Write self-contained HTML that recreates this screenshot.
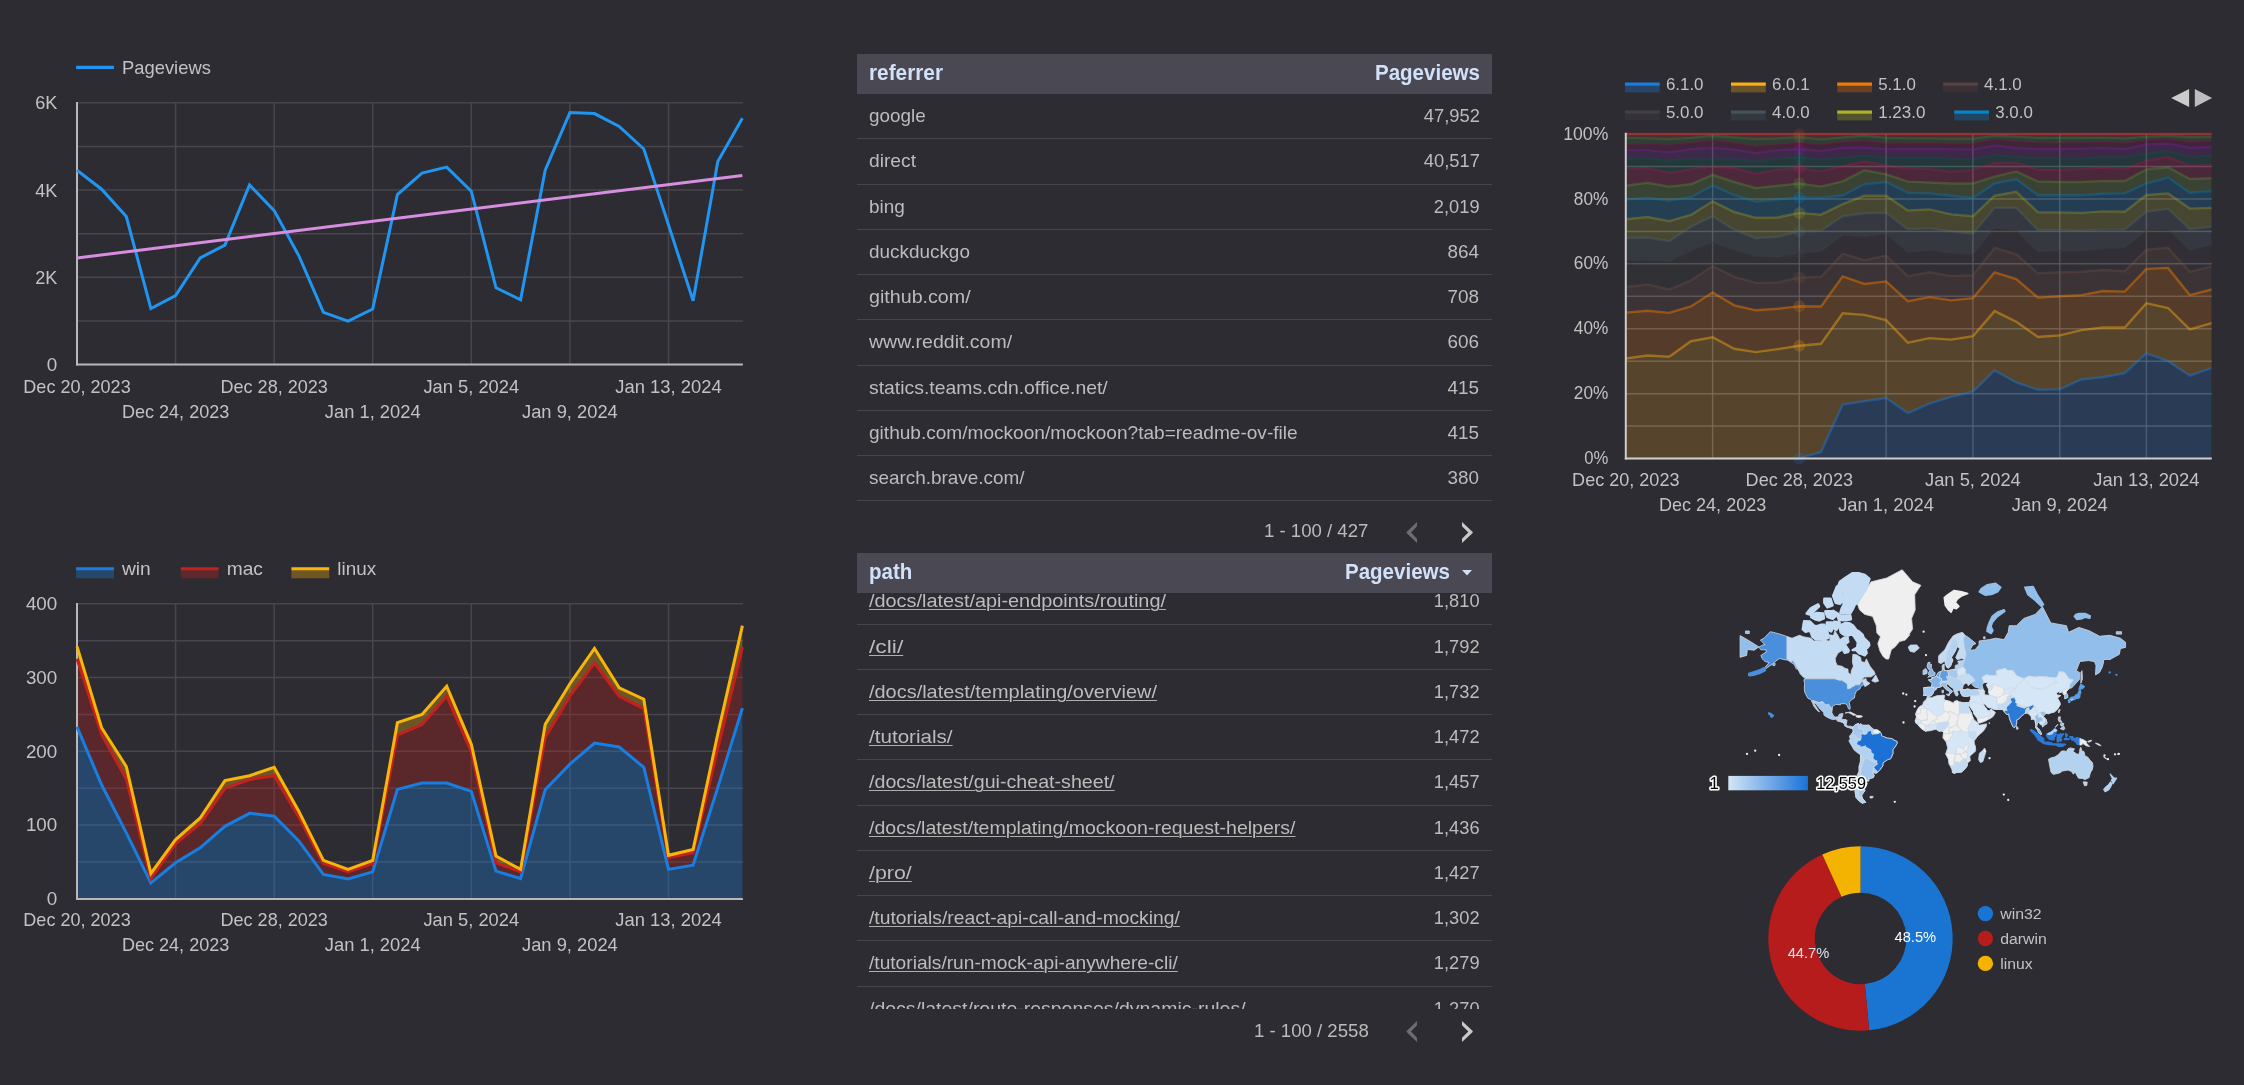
<!DOCTYPE html>
<html lang="en">
<head>
<meta charset="utf-8">
<title>Mockoon analytics dashboard</title>
<style>
html,body{margin:0;padding:0;background:#2e2c33;}
body{width:2244px;height:1085px;position:relative;overflow:hidden;font-family:"Liberation Sans",sans-serif;color:#c3c3c3;}
svg{position:absolute;overflow:visible;}
svg text{font-family:"Liberation Sans",sans-serif;}
.tbl{position:absolute;left:857px;width:635.3px;}
.tbl,.pg,svg{will-change:opacity;opacity:0.999;}
.th{position:absolute;left:0;width:100%;height:40.2px;background:#4b4953;color:#d3e2fb;font-weight:bold;font-size:21.7px;}
.th span{position:absolute;top:-0.6px;line-height:40.2px;white-space:nowrap;display:inline-block;}
.body{position:absolute;left:0;width:100%;overflow:hidden;}
.row{position:absolute;left:0;width:100%;height:45.25px;border-bottom:1.5px solid #47454d;box-sizing:border-box;font-size:18.6px;color:#bdbdbd;}
.row span,.pg span{position:absolute;white-space:nowrap;display:inline-block;line-height:22px;}
.row .l{left:12.2px;transform-origin:0 50%;}
.row .r{right:12.8px;transform-origin:100% 50%;}
.row a{color:inherit;text-decoration:underline;text-decoration-thickness:1.25px;text-underline-offset:2.1px;text-decoration-color:#b0b0b0;}
.pg{position:absolute;font-size:18.6px;color:#bcbcbc;}
</style>
</head>
<body>

<svg width="800" height="440" viewBox="0 20 800 440" style="left:0;top:20px">
<g stroke="#48474d" stroke-width="1.5">
<line x1="175.6" y1="102.8" x2="175.6" y2="364.6"/>
<line x1="274.2" y1="102.8" x2="274.2" y2="364.6"/>
<line x1="372.7" y1="102.8" x2="372.7" y2="364.6"/>
<line x1="471.3" y1="102.8" x2="471.3" y2="364.6"/>
<line x1="569.9" y1="102.8" x2="569.9" y2="364.6"/>
<line x1="668.5" y1="102.8" x2="668.5" y2="364.6"/>
<line x1="77.0" y1="102.8" x2="742.9" y2="102.8"/>
<line x1="77.0" y1="146.4" x2="742.9" y2="146.4"/>
<line x1="77.0" y1="190.1" x2="742.9" y2="190.1"/>
<line x1="77.0" y1="233.7" x2="742.9" y2="233.7"/>
<line x1="77.0" y1="277.3" x2="742.9" y2="277.3"/>
<line x1="77.0" y1="320.9" x2="742.9" y2="320.9"/>
</g>
<g stroke="#b9b9b9" stroke-width="2"><line x1="77.0" y1="102.1" x2="77.0" y2="365.6"/><line x1="76.0" y1="364.6" x2="742.9" y2="364.6"/></g>
<polyline fill="none" stroke="#2196f3" stroke-width="3" stroke-linejoin="miter" points="77.0,170.3 101.6,189.2 126.3,216.6 150.9,308.6 175.6,295.6 200.2,257.9 224.9,245.1 249.5,184.9 274.2,210.6 298.8,255.7 323.4,312.3 348.1,321.1 372.7,309.0 397.4,194.6 422.0,173.0 446.7,167.1 471.3,191.2 496.0,287.8 520.6,299.8 545.2,170.2 569.9,112.6 594.5,113.6 619.2,126.5 643.8,149.0 668.5,224.9 693.1,300.8 717.8,161.5 742.4,118.3"/>
<line x1="77.0" y1="257.9" x2="742.3" y2="175.4" stroke="#d88fe2" stroke-width="3"/>
<line x1="76.1" y1="67.4" x2="113.9" y2="67.4" stroke="#2196f3" stroke-width="3.2"/>
<text x="122.0" y="74.1" font-size="18.6" text-anchor="start" fill="#c3c3c3" textLength="88.9" lengthAdjust="spacingAndGlyphs">Pageviews</text>
<text x="57.3" y="109.3" font-size="18.6" text-anchor="end" fill="#c3c3c3" textLength="22.1" lengthAdjust="spacingAndGlyphs">6K</text>
<text x="57.3" y="196.6" font-size="18.6" text-anchor="end" fill="#c3c3c3" textLength="22.1" lengthAdjust="spacingAndGlyphs">4K</text>
<text x="57.3" y="283.8" font-size="18.6" text-anchor="end" fill="#c3c3c3" textLength="22.1" lengthAdjust="spacingAndGlyphs">2K</text>
<text x="57.3" y="371.1" font-size="18.6" text-anchor="end" fill="#c3c3c3" textLength="10.5" lengthAdjust="spacingAndGlyphs">0</text>
<text x="77.0" y="392.7" font-size="18.6" text-anchor="middle" fill="#c3c3c3" textLength="107.4" lengthAdjust="spacingAndGlyphs">Dec 20, 2023</text>
<text x="175.6" y="417.5" font-size="18.6" text-anchor="middle" fill="#c3c3c3" textLength="107.4" lengthAdjust="spacingAndGlyphs">Dec 24, 2023</text>
<text x="274.2" y="392.7" font-size="18.6" text-anchor="middle" fill="#c3c3c3" textLength="107.4" lengthAdjust="spacingAndGlyphs">Dec 28, 2023</text>
<text x="372.7" y="417.5" font-size="18.6" text-anchor="middle" fill="#c3c3c3" textLength="95.8" lengthAdjust="spacingAndGlyphs">Jan 1, 2024</text>
<text x="471.3" y="392.7" font-size="18.6" text-anchor="middle" fill="#c3c3c3" textLength="95.8" lengthAdjust="spacingAndGlyphs">Jan 5, 2024</text>
<text x="569.9" y="417.5" font-size="18.6" text-anchor="middle" fill="#c3c3c3" textLength="95.8" lengthAdjust="spacingAndGlyphs">Jan 9, 2024</text>
<text x="668.5" y="392.7" font-size="18.6" text-anchor="middle" fill="#c3c3c3" textLength="106.3" lengthAdjust="spacingAndGlyphs">Jan 13, 2024</text>
</svg>
<svg width="800" height="460" viewBox="0 540 800 460" style="left:0;top:540px">
<g stroke="#48474d" stroke-width="1.5">
<line x1="175.6" y1="603.8" x2="175.6" y2="898.9"/>
<line x1="274.2" y1="603.8" x2="274.2" y2="898.9"/>
<line x1="372.7" y1="603.8" x2="372.7" y2="898.9"/>
<line x1="471.3" y1="603.8" x2="471.3" y2="898.9"/>
<line x1="569.9" y1="603.8" x2="569.9" y2="898.9"/>
<line x1="668.5" y1="603.8" x2="668.5" y2="898.9"/>
<line x1="77.0" y1="603.8" x2="742.9" y2="603.8"/>
<line x1="77.0" y1="640.7" x2="742.9" y2="640.7"/>
<line x1="77.0" y1="677.6" x2="742.9" y2="677.6"/>
<line x1="77.0" y1="714.5" x2="742.9" y2="714.5"/>
<line x1="77.0" y1="751.3" x2="742.9" y2="751.3"/>
<line x1="77.0" y1="788.2" x2="742.9" y2="788.2"/>
<line x1="77.0" y1="825.1" x2="742.9" y2="825.1"/>
<line x1="77.0" y1="862.0" x2="742.9" y2="862.0"/>
</g>
<polygon fill="#1a7fe2" fill-opacity="0.32" points="77.0,726.9 101.6,784.8 126.3,832.9 150.9,883.0 175.6,862.8 200.2,847.8 224.9,826.3 249.5,813.3 274.2,816.3 298.8,840.9 323.4,874.4 348.1,879.0 372.7,871.9 397.4,789.4 422.0,783.1 446.7,783.1 471.3,791.4 496.0,871.1 520.6,878.5 545.2,789.8 569.9,764.1 594.5,743.0 619.2,747.0 643.8,767.4 668.5,869.4 693.1,865.2 717.8,787.6 742.4,708.1 742.4,898.9 717.8,898.9 693.1,898.9 668.5,898.9 643.8,898.9 619.2,898.9 594.5,898.9 569.9,898.9 545.2,898.9 520.6,898.9 496.0,898.9 471.3,898.9 446.7,898.9 422.0,898.9 397.4,898.9 372.7,898.9 348.1,898.9 323.4,898.9 298.8,898.9 274.2,898.9 249.5,898.9 224.9,898.9 200.2,898.9 175.6,898.9 150.9,898.9 126.3,898.9 101.6,898.9 77.0,898.9"/>
<polygon fill="#c5211f" fill-opacity="0.3" points="77.0,658.8 101.6,734.3 126.3,779.0 150.9,878.5 175.6,843.7 200.2,823.8 224.9,788.4 249.5,779.5 274.2,775.7 298.8,817.1 323.4,863.6 348.1,871.9 372.7,863.6 397.4,735.2 422.0,724.4 446.7,696.2 471.3,751.7 496.0,862.8 520.6,871.9 545.2,737.6 569.9,696.2 594.5,663.0 619.2,696.2 643.8,708.6 668.5,857.8 693.1,852.8 717.8,748.4 742.4,647.2 742.4,708.1 717.8,787.6 693.1,865.2 668.5,869.4 643.8,767.4 619.2,747.0 594.5,743.0 569.9,764.1 545.2,789.8 520.6,878.5 496.0,871.1 471.3,791.4 446.7,783.1 422.0,783.1 397.4,789.4 372.7,871.9 348.1,879.0 323.4,874.4 298.8,840.9 274.2,816.3 249.5,813.3 224.9,826.3 200.2,847.8 175.6,862.8 150.9,883.0 126.3,832.9 101.6,784.8 77.0,726.9"/>
<polygon fill="#f9b709" fill-opacity="0.31" points="77.0,646.4 101.6,727.7 126.3,766.5 150.9,873.5 175.6,839.5 200.2,818.0 224.9,780.6 249.5,775.7 274.2,767.4 298.8,811.3 323.4,860.3 348.1,869.4 372.7,860.3 397.4,722.7 422.0,714.4 446.7,686.2 471.3,744.3 496.0,856.1 520.6,869.4 545.2,724.4 569.9,683.7 594.5,648.4 619.2,687.9 643.8,699.2 668.5,855.3 693.1,849.5 717.8,733.8 742.4,625.7 742.4,647.2 717.8,748.4 693.1,852.8 668.5,857.8 643.8,708.6 619.2,696.2 594.5,663.0 569.9,696.2 545.2,737.6 520.6,871.9 496.0,862.8 471.3,751.7 446.7,696.2 422.0,724.4 397.4,735.2 372.7,863.6 348.1,871.9 323.4,863.6 298.8,817.1 274.2,775.7 249.5,779.5 224.9,788.4 200.2,823.8 175.6,843.7 150.9,878.5 126.3,779.0 101.6,734.3 77.0,658.8"/>
<g stroke="#b9b9b9" stroke-width="2"><line x1="77.0" y1="603.1" x2="77.0" y2="899.9"/><line x1="76.0" y1="898.9" x2="742.9" y2="898.9"/></g>
<polyline fill="none" stroke="#1a7fe2" stroke-width="3" points="77.0,726.9 101.6,784.8 126.3,832.9 150.9,883.0 175.6,862.8 200.2,847.8 224.9,826.3 249.5,813.3 274.2,816.3 298.8,840.9 323.4,874.4 348.1,879.0 372.7,871.9 397.4,789.4 422.0,783.1 446.7,783.1 471.3,791.4 496.0,871.1 520.6,878.5 545.2,789.8 569.9,764.1 594.5,743.0 619.2,747.0 643.8,767.4 668.5,869.4 693.1,865.2 717.8,787.6 742.4,708.1"/>
<polyline fill="none" stroke="#c5211f" stroke-width="3" points="77.0,658.8 101.6,734.3 126.3,779.0 150.9,878.5 175.6,843.7 200.2,823.8 224.9,788.4 249.5,779.5 274.2,775.7 298.8,817.1 323.4,863.6 348.1,871.9 372.7,863.6 397.4,735.2 422.0,724.4 446.7,696.2 471.3,751.7 496.0,862.8 520.6,871.9 545.2,737.6 569.9,696.2 594.5,663.0 619.2,696.2 643.8,708.6 668.5,857.8 693.1,852.8 717.8,748.4 742.4,647.2"/>
<polyline fill="none" stroke="#f9b709" stroke-width="3" points="77.0,646.4 101.6,727.7 126.3,766.5 150.9,873.5 175.6,839.5 200.2,818.0 224.9,780.6 249.5,775.7 274.2,767.4 298.8,811.3 323.4,860.3 348.1,869.4 372.7,860.3 397.4,722.7 422.0,714.4 446.7,686.2 471.3,744.3 496.0,856.1 520.6,869.4 545.2,724.4 569.9,683.7 594.5,648.4 619.2,687.9 643.8,699.2 668.5,855.3 693.1,849.5 717.8,733.8 742.4,625.7"/>
<rect x="76.1" y="570" width="37.8" height="8.3" fill="#1a7fe2" fill-opacity="0.33"/>
<line x1="76.1" y1="568.7" x2="113.89999999999999" y2="568.7" stroke="#1a7fe2" stroke-width="3"/>
<text x="122.0" y="575.2" font-size="18.6" text-anchor="start" fill="#c3c3c3" textLength="28.8" lengthAdjust="spacingAndGlyphs">win</text>
<rect x="180.8" y="570" width="37.8" height="8.3" fill="#c5211f" fill-opacity="0.33"/>
<line x1="180.8" y1="568.7" x2="218.60000000000002" y2="568.7" stroke="#c5211f" stroke-width="3"/>
<text x="226.7" y="575.2" font-size="18.6" text-anchor="start" fill="#c3c3c3" textLength="36.2" lengthAdjust="spacingAndGlyphs">mac</text>
<rect x="291.4" y="570" width="37.8" height="8.3" fill="#f9b709" fill-opacity="0.33"/>
<line x1="291.4" y1="568.7" x2="329.2" y2="568.7" stroke="#f9b709" stroke-width="3"/>
<text x="337.3" y="575.2" font-size="18.6" text-anchor="start" fill="#c3c3c3" textLength="38.8" lengthAdjust="spacingAndGlyphs">linux</text>
<text x="57.3" y="610.1" font-size="18.6" text-anchor="end" fill="#c3c3c3" textLength="31.4" lengthAdjust="spacingAndGlyphs">400</text>
<text x="57.3" y="683.9" font-size="18.6" text-anchor="end" fill="#c3c3c3" textLength="31.4" lengthAdjust="spacingAndGlyphs">300</text>
<text x="57.3" y="757.6" font-size="18.6" text-anchor="end" fill="#c3c3c3" textLength="31.4" lengthAdjust="spacingAndGlyphs">200</text>
<text x="57.3" y="831.4" font-size="18.6" text-anchor="end" fill="#c3c3c3" textLength="31.4" lengthAdjust="spacingAndGlyphs">100</text>
<text x="57.3" y="905.2" font-size="18.6" text-anchor="end" fill="#c3c3c3" textLength="10.5" lengthAdjust="spacingAndGlyphs">0</text>
<text x="77.0" y="925.8" font-size="18.6" text-anchor="middle" fill="#c3c3c3" textLength="107.4" lengthAdjust="spacingAndGlyphs">Dec 20, 2023</text>
<text x="175.6" y="950.6" font-size="18.6" text-anchor="middle" fill="#c3c3c3" textLength="107.4" lengthAdjust="spacingAndGlyphs">Dec 24, 2023</text>
<text x="274.2" y="925.8" font-size="18.6" text-anchor="middle" fill="#c3c3c3" textLength="107.4" lengthAdjust="spacingAndGlyphs">Dec 28, 2023</text>
<text x="372.7" y="950.6" font-size="18.6" text-anchor="middle" fill="#c3c3c3" textLength="95.8" lengthAdjust="spacingAndGlyphs">Jan 1, 2024</text>
<text x="471.3" y="925.8" font-size="18.6" text-anchor="middle" fill="#c3c3c3" textLength="95.8" lengthAdjust="spacingAndGlyphs">Jan 5, 2024</text>
<text x="569.9" y="950.6" font-size="18.6" text-anchor="middle" fill="#c3c3c3" textLength="95.8" lengthAdjust="spacingAndGlyphs">Jan 9, 2024</text>
<text x="668.5" y="925.8" font-size="18.6" text-anchor="middle" fill="#c3c3c3" textLength="106.3" lengthAdjust="spacingAndGlyphs">Jan 13, 2024</text>
</svg>
<div class="tbl" style="top:53.8px">
<div class="th">
<span style="left:11.6px;transform-origin:0 50%;transform:scaleX(0.9592)">referrer</span>
<span style="right:12.8px;transform-origin:100% 50%;transform:scaleX(0.9461)">Pageviews</span>
</div>
<div class="body" style="top:40.2px;height:410px">
<div class="row" style="top:0.20px"><span class="l" style="transform:scaleX(1.0157);top:10.9px;">google</span><span class="r" style="transform:scaleX(0.9873);top:10.9px;">47,952</span></div>
<div class="row" style="top:45.45px"><span class="l" style="transform:scaleX(1.0340);top:10.9px;">direct</span><span class="r" style="transform:scaleX(0.9873);top:10.9px;">40,517</span></div>
<div class="row" style="top:90.70px"><span class="l" style="transform:scaleX(1.0191);top:10.9px;">bing</span><span class="r" style="transform:scaleX(0.9812);top:10.9px;">2,019</span></div>
<div class="row" style="top:135.95px"><span class="l" style="transform:scaleX(1.0168);top:10.9px;">duckduckgo</span><span class="r" style="transform:scaleX(1.0149);top:10.9px;">864</span></div>
<div class="row" style="top:181.20px"><span class="l" style="transform:scaleX(1.0573);top:10.9px;">github.com/</span><span class="r" style="transform:scaleX(1.0149);top:10.9px;">708</span></div>
<div class="row" style="top:226.45px"><span class="l" style="transform:scaleX(1.0491);top:10.9px;">www.reddit.com/</span><span class="r" style="transform:scaleX(1.0149);top:10.9px;">606</span></div>
<div class="row" style="top:271.70px"><span class="l" style="transform:scaleX(1.0422);top:10.9px;">statics.teams.cdn.office.net/</span><span class="r" style="transform:scaleX(1.0149);top:10.9px;">415</span></div>
<div class="row" style="top:316.95px"><span class="l" style="transform:scaleX(1.0252);top:10.9px;">github.com/mockoon/mockoon?tab=readme-ov-file</span><span class="r" style="transform:scaleX(1.0149);top:10.9px;">415</span></div>
<div class="row" style="top:362.20px"><span class="l" style="transform:scaleX(1.0171);top:10.9px;">search.brave.com/</span><span class="r" style="transform:scaleX(1.0149);top:10.9px;">380</span></div>
</div>
</div>
<div class="tbl" style="top:553.0px">
<div class="th">
<span style="left:11.6px;transform-origin:0 50%;transform:scaleX(0.9456)">path</span>
<span style="right:42.4px;transform-origin:100% 50%;transform:scaleX(0.9461)">Pageviews</span>
<svg width="10" height="6" viewBox="0 0 10 6" style="left:605.2px;top:16.5px"><path d="M0 0h10l-5 5.6z" fill="#d3e2fb"/></svg>
</div>
<div class="body" style="top:40.2px;height:415.6px">
<div class="row" style="top:-13.70px"><span class="l" style="transform:scaleX(1.0680);top:10.9px;"><a>/docs/latest/api-endpoints/routing/</a></span><span class="r" style="transform:scaleX(0.9812);top:10.9px;">1,810</span></div>
<div class="row" style="top:31.55px"><span class="l" style="transform:scaleX(1.2286);top:10.9px;"><a>/cli/</a></span><span class="r" style="transform:scaleX(0.9812);top:10.9px;">1,792</span></div>
<div class="row" style="top:76.80px"><span class="l" style="transform:scaleX(1.0717);top:10.9px;"><a>/docs/latest/templating/overview/</a></span><span class="r" style="transform:scaleX(0.9812);top:10.9px;">1,732</span></div>
<div class="row" style="top:122.05px"><span class="l" style="transform:scaleX(1.1082);top:10.9px;"><a>/tutorials/</a></span><span class="r" style="transform:scaleX(0.9812);top:10.9px;">1,472</span></div>
<div class="row" style="top:167.30px"><span class="l" style="transform:scaleX(1.0560);top:10.9px;"><a>/docs/latest/gui-cheat-sheet/</a></span><span class="r" style="transform:scaleX(0.9812);top:10.9px;">1,457</span></div>
<div class="row" style="top:212.55px"><span class="l" style="transform:scaleX(1.0500);top:10.9px;"><a>/docs/latest/templating/mockoon-request-helpers/</a></span><span class="r" style="transform:scaleX(0.9812);top:10.9px;">1,436</span></div>
<div class="row" style="top:257.80px"><span class="l" style="transform:scaleX(1.1474);top:10.9px;"><a>/pro/</a></span><span class="r" style="transform:scaleX(0.9812);top:10.9px;">1,427</span></div>
<div class="row" style="top:303.05px"><span class="l" style="transform:scaleX(1.0373);top:10.9px;"><a>/tutorials/react-api-call-and-mocking/</a></span><span class="r" style="transform:scaleX(0.9812);top:10.9px;">1,302</span></div>
<div class="row" style="top:348.30px"><span class="l" style="transform:scaleX(1.0304);top:10.9px;"><a>/tutorials/run-mock-api-anywhere-cli/</a></span><span class="r" style="transform:scaleX(0.9812);top:10.9px;">1,279</span></div>
<div class="row" style="top:393.55px"><span class="l" style="transform:scaleX(1.0470);top:10.9px;"><a>/docs/latest/route-responses/dynamic-rules/</a></span><span class="r" style="transform:scaleX(0.9812);top:10.9px;">1,270</span></div>
</div>
</div>
<div class="pg" style="left:1264.0px;top:519.5px;width:105.4px;height:22px"><span style="right:1px;top:0;transform-origin:100% 50%;transform:scaleX(1.0000)">1 - 100 / 427</span></div>
<svg width="24" height="28" viewBox="1400 518.0 24 28" style="left:1400px;top:518.0px"><polygon fill="#6e6d73" points="1417,522.1 1406.6,532.1 1406.6,532.9 1417,543.0 1417,538.8 1411,532.5 1417,526.2"/></svg>
<svg width="24" height="28" viewBox="1455 518.0 24 28" style="left:1455px;top:518.0px"><polygon fill="#c9c9c9" points="1462,522.1 1472.7,532.1 1472.7,532.9 1462,543.0 1462,538.8 1468.3,532.5 1462,526.2"/></svg>
<div class="pg" style="left:1253.6px;top:1019.5px;width:115.8px;height:22px"><span style="right:1px;top:0;transform-origin:100% 50%;transform:scaleX(1.0010)">1 - 100 / 2558</span></div>
<svg width="24" height="28" viewBox="1400 1017.3 24 28" style="left:1400px;top:1017.3px"><polygon fill="#6e6d73" points="1417,1021.4 1406.6,1031.4 1406.6,1032.2 1417,1042.3 1417,1038.1 1411,1031.8 1417,1025.5"/></svg>
<svg width="24" height="28" viewBox="1455 1017.3 24 28" style="left:1455px;top:1017.3px"><polygon fill="#c9c9c9" points="1462,1021.4 1472.7,1031.4 1472.7,1032.2 1462,1042.3 1462,1038.1 1468.3,1031.8 1462,1025.5"/></svg>
<svg width="704" height="500" viewBox="1540 40 704 500" style="left:1540px;top:40px">
<g stroke="#4d4c52" stroke-width="1.5">
<line x1="1712.6" y1="134.0" x2="1712.6" y2="458.6"/>
<line x1="1799.3" y1="134.0" x2="1799.3" y2="458.6"/>
<line x1="1886.1" y1="134.0" x2="1886.1" y2="458.6"/>
<line x1="1972.9" y1="134.0" x2="1972.9" y2="458.6"/>
<line x1="2059.7" y1="134.0" x2="2059.7" y2="458.6"/>
<line x1="2146.4" y1="134.0" x2="2146.4" y2="458.6"/>
<line x1="1625.8" y1="134.0" x2="2211.8" y2="134.0"/>
<line x1="1625.8" y1="166.5" x2="2211.8" y2="166.5"/>
<line x1="1625.8" y1="198.9" x2="2211.8" y2="198.9"/>
<line x1="1625.8" y1="231.4" x2="2211.8" y2="231.4"/>
<line x1="1625.8" y1="263.8" x2="2211.8" y2="263.8"/>
<line x1="1625.8" y1="296.3" x2="2211.8" y2="296.3"/>
<line x1="1625.8" y1="328.8" x2="2211.8" y2="328.8"/>
<line x1="1625.8" y1="361.2" x2="2211.8" y2="361.2"/>
<line x1="1625.8" y1="393.7" x2="2211.8" y2="393.7"/>
<line x1="1625.8" y1="426.1" x2="2211.8" y2="426.1"/>
</g>
<polygon fill="#1a7fe0" fill-opacity="0.2" points="1625.8,458.4 1647.5,458.4 1669.2,458.4 1690.9,458.4 1712.6,458.4 1734.3,458.4 1756.0,458.4 1777.6,458.4 1799.3,458.4 1821.0,451.9 1842.7,404.6 1864.4,401.3 1886.1,398.0 1907.8,413.1 1929.5,403.6 1951.2,396.9 1972.9,391.7 1994.6,370.4 2016.3,382.5 2038.0,389.8 2059.7,389.4 2081.3,379.5 2103.0,377.2 2124.7,373.1 2146.4,353.3 2168.1,361.2 2189.8,375.7 2211.5,368.1 2211.5,458.6 2189.8,458.6 2168.1,458.6 2146.4,458.6 2124.7,458.6 2103.0,458.6 2081.3,458.6 2059.7,458.6 2038.0,458.6 2016.3,458.6 1994.6,458.6 1972.9,458.6 1951.2,458.6 1929.5,458.6 1907.8,458.6 1886.1,458.6 1864.4,458.6 1842.7,458.6 1821.0,458.6 1799.3,458.6 1777.6,458.6 1756.0,458.6 1734.3,458.6 1712.6,458.6 1690.9,458.6 1669.2,458.6 1647.5,458.6 1625.8,458.6"/>
<polygon fill="#fbb015" fill-opacity="0.2" points="1625.8,358.5 1647.5,355.5 1669.2,356.7 1690.9,341.2 1712.6,337.2 1734.3,348.8 1756.0,352.1 1777.6,349.1 1799.3,345.7 1821.0,343.8 1842.7,313.3 1864.4,314.9 1886.1,320.2 1907.8,342.7 1929.5,338.1 1951.2,339.6 1972.9,336.2 1994.6,311.1 2016.3,321.7 2038.0,336.9 2059.7,335.4 2081.3,330.1 2103.0,327.5 2124.7,327.5 2146.4,303.2 2168.1,308.0 2189.8,329.3 2211.5,323.2 2211.5,368.1 2189.8,375.7 2168.1,361.2 2146.4,353.3 2124.7,373.1 2103.0,377.2 2081.3,379.5 2059.7,389.4 2038.0,389.8 2016.3,382.5 1994.6,370.4 1972.9,391.7 1951.2,396.9 1929.5,403.6 1907.8,413.1 1886.1,398.0 1864.4,401.3 1842.7,404.6 1821.0,451.9 1799.3,458.4 1777.6,458.4 1756.0,458.4 1734.3,458.4 1712.6,458.4 1690.9,458.4 1669.2,458.4 1647.5,458.4 1625.8,458.4"/>
<polygon fill="#f57c00" fill-opacity="0.2" points="1625.8,312.6 1647.5,310.8 1669.2,312.9 1690.9,306.5 1712.6,292.5 1734.3,305.3 1756.0,310.3 1777.6,308.8 1799.3,306.2 1821.0,306.5 1842.7,276.4 1864.4,284.0 1886.1,281.4 1907.8,301.2 1929.5,297.1 1951.2,300.4 1972.9,298.1 1994.6,272.3 2016.3,279.1 2038.0,297.7 2059.7,296.2 2081.3,295.1 2103.0,291.0 2124.7,291.6 2146.4,268.9 2168.1,267.9 2189.8,295.1 2211.5,289.5 2211.5,323.2 2189.8,329.3 2168.1,308.0 2146.4,303.2 2124.7,327.5 2103.0,327.5 2081.3,330.1 2059.7,335.4 2038.0,336.9 2016.3,321.7 1994.6,311.1 1972.9,336.2 1951.2,339.6 1929.5,338.1 1907.8,342.7 1886.1,320.2 1864.4,314.9 1842.7,313.3 1821.0,343.8 1799.3,345.7 1777.6,349.1 1756.0,352.1 1734.3,348.8 1712.6,337.2 1690.9,341.2 1669.2,356.7 1647.5,355.5 1625.8,358.5"/>
<polygon fill="#795548" fill-opacity="0.2" points="1625.8,287.0 1647.5,284.4 1669.2,289.5 1690.9,280.6 1712.6,266.1 1734.3,276.8 1756.0,282.9 1777.6,282.5 1799.3,277.6 1821.0,276.8 1842.7,253.5 1864.4,260.3 1886.1,255.5 1907.8,276.1 1929.5,272.3 1951.2,276.1 1972.9,275.3 1994.6,247.9 2016.3,254.3 2038.0,273.3 2059.7,272.3 2081.3,271.8 2103.0,270.0 2124.7,271.2 2146.4,249.7 2168.1,247.9 2189.8,271.8 2211.5,266.4 2211.5,289.5 2189.8,295.1 2168.1,267.9 2146.4,268.9 2124.7,291.6 2103.0,291.0 2081.3,295.1 2059.7,296.2 2038.0,297.7 2016.3,279.1 1994.6,272.3 1972.9,298.1 1951.2,300.4 1929.5,297.1 1907.8,301.2 1886.1,281.4 1864.4,284.0 1842.7,276.4 1821.0,306.5 1799.3,306.2 1777.6,308.8 1756.0,310.3 1734.3,305.3 1712.6,292.5 1690.9,306.5 1669.2,312.9 1647.5,310.8 1625.8,312.6"/>
<polygon fill="#424242" fill-opacity="0.2" points="1625.8,260.3 1647.5,259.6 1669.2,261.1 1690.9,250.5 1712.6,242.1 1734.3,249.7 1756.0,255.8 1777.6,257.3 1799.3,252.7 1821.0,251.2 1842.7,234.5 1864.4,236.8 1886.1,233.0 1907.8,252.0 1929.5,249.7 1951.2,252.7 1972.9,254.3 1994.6,227.6 2016.3,229.9 2038.0,251.2 2059.7,250.5 2081.3,250.5 2103.0,248.2 2124.7,247.4 2146.4,229.9 2168.1,228.4 2189.8,249.7 2211.5,244.4 2211.5,266.4 2189.8,271.8 2168.1,247.9 2146.4,249.7 2124.7,271.2 2103.0,270.0 2081.3,271.8 2059.7,272.3 2038.0,273.3 2016.3,254.3 1994.6,247.9 1972.9,275.3 1951.2,276.1 1929.5,272.3 1907.8,276.1 1886.1,255.5 1864.4,260.3 1842.7,253.5 1821.0,276.8 1799.3,277.6 1777.6,282.5 1756.0,282.9 1734.3,276.8 1712.6,266.1 1690.9,280.6 1669.2,289.5 1647.5,284.4 1625.8,287.0"/>
<polygon fill="#546e7a" fill-opacity="0.2" points="1625.8,238.3 1647.5,237.5 1669.2,241.3 1690.9,226.9 1712.6,216.2 1734.3,229.9 1756.0,238.3 1777.6,236.8 1799.3,231.4 1821.0,230.7 1842.7,216.2 1864.4,213.2 1886.1,212.9 1907.8,229.2 1929.5,228.4 1951.2,231.4 1972.9,233.7 1994.6,207.9 2016.3,207.9 2038.0,230.2 2059.7,230.2 2081.3,230.7 2103.0,229.6 2124.7,229.6 2146.4,211.7 2168.1,208.9 2189.8,229.2 2211.5,226.6 2211.5,244.4 2189.8,249.7 2168.1,228.4 2146.4,229.9 2124.7,247.4 2103.0,248.2 2081.3,250.5 2059.7,250.5 2038.0,251.2 2016.3,229.9 1994.6,227.6 1972.9,254.3 1951.2,252.7 1929.5,249.7 1907.8,252.0 1886.1,233.0 1864.4,236.8 1842.7,234.5 1821.0,251.2 1799.3,252.7 1777.6,257.3 1756.0,255.8 1734.3,249.7 1712.6,242.1 1690.9,250.5 1669.2,261.1 1647.5,259.6 1625.8,260.3"/>
<polygon fill="#afb42b" fill-opacity="0.2" points="1625.8,219.3 1647.5,217.0 1669.2,221.1 1690.9,215.0 1712.6,201.3 1734.3,212.0 1756.0,217.8 1777.6,217.5 1799.3,212.9 1821.0,214.7 1842.7,204.1 1864.4,195.7 1886.1,195.7 1907.8,210.5 1929.5,209.4 1951.2,214.4 1972.9,216.2 1994.6,195.7 2016.3,191.9 2038.0,212.4 2059.7,212.4 2081.3,212.9 2103.0,211.4 2124.7,211.7 2146.4,195.0 2168.1,193.4 2189.8,208.6 2211.5,207.9 2211.5,226.6 2189.8,229.2 2168.1,208.9 2146.4,211.7 2124.7,229.6 2103.0,229.6 2081.3,230.7 2059.7,230.2 2038.0,230.2 2016.3,207.9 1994.6,207.9 1972.9,233.7 1951.2,231.4 1929.5,228.4 1907.8,229.2 1886.1,212.9 1864.4,213.2 1842.7,216.2 1821.0,230.7 1799.3,231.4 1777.6,236.8 1756.0,238.3 1734.3,229.9 1712.6,216.2 1690.9,226.9 1669.2,241.3 1647.5,237.5 1625.8,238.3"/>
<polygon fill="#0288d1" fill-opacity="0.2" points="1625.8,199.5 1647.5,197.7 1669.2,200.7 1690.9,197.2 1712.6,185.5 1734.3,195.0 1756.0,201.8 1777.6,199.5 1799.3,197.2 1821.0,198.0 1842.7,195.3 1864.4,184.3 1886.1,182.0 1907.8,192.7 1929.5,193.4 1951.2,195.7 1972.9,198.0 1994.6,183.5 2016.3,179.4 2038.0,195.3 2059.7,195.3 2081.3,195.3 2103.0,193.7 2124.7,193.4 2146.4,183.5 2168.1,177.5 2189.8,192.7 2211.5,191.1 2211.5,207.9 2189.8,208.6 2168.1,193.4 2146.4,195.0 2124.7,211.7 2103.0,211.4 2081.3,212.9 2059.7,212.4 2038.0,212.4 2016.3,191.9 1994.6,195.7 1972.9,216.2 1951.2,214.4 1929.5,209.4 1907.8,210.5 1886.1,195.7 1864.4,195.7 1842.7,204.1 1821.0,214.7 1799.3,212.9 1777.6,217.5 1756.0,217.8 1734.3,212.0 1712.6,201.3 1690.9,215.0 1669.2,221.1 1647.5,217.0 1625.8,219.3"/>
<polygon fill="#689f38" fill-opacity="0.2" points="1625.8,185.8 1647.5,182.8 1669.2,186.6 1690.9,184.3 1712.6,174.9 1734.3,182.0 1756.0,188.1 1777.6,185.8 1799.3,183.5 1821.0,186.6 1842.7,181.3 1864.4,170.3 1886.1,174.4 1907.8,181.6 1929.5,182.5 1951.2,183.5 1972.9,183.5 1994.6,176.7 2016.3,171.4 2038.0,181.6 2059.7,182.0 2081.3,182.0 2103.0,181.0 2124.7,181.0 2146.4,169.4 2168.1,167.3 2189.8,179.0 2211.5,178.2 2211.5,191.1 2189.8,192.7 2168.1,177.5 2146.4,183.5 2124.7,193.4 2103.0,193.7 2081.3,195.3 2059.7,195.3 2038.0,195.3 2016.3,179.4 1994.6,183.5 1972.9,198.0 1951.2,195.7 1929.5,193.4 1907.8,192.7 1886.1,182.0 1864.4,184.3 1842.7,195.3 1821.0,198.0 1799.3,197.2 1777.6,199.5 1756.0,201.8 1734.3,195.0 1712.6,185.5 1690.9,197.2 1669.2,200.7 1647.5,197.7 1625.8,199.5"/>
<polygon fill="#c2185b" fill-opacity="0.2" points="1625.8,169.1 1647.5,168.3 1669.2,172.9 1690.9,169.4 1712.6,166.4 1734.3,168.3 1756.0,173.7 1777.6,169.9 1799.3,168.3 1821.0,171.4 1842.7,166.1 1864.4,161.5 1886.1,165.8 1907.8,168.3 1929.5,169.1 1951.2,171.8 1972.9,169.9 1994.6,163.0 2016.3,162.7 2038.0,169.9 2059.7,169.9 2081.3,169.1 2103.0,167.6 2124.7,169.1 2146.4,160.7 2168.1,156.9 2189.8,165.8 2211.5,165.3 2211.5,178.2 2189.8,179.0 2168.1,167.3 2146.4,169.4 2124.7,181.0 2103.0,181.0 2081.3,182.0 2059.7,182.0 2038.0,181.6 2016.3,171.4 1994.6,176.7 1972.9,183.5 1951.2,183.5 1929.5,182.5 1907.8,181.6 1886.1,174.4 1864.4,170.3 1842.7,181.3 1821.0,186.6 1799.3,183.5 1777.6,185.8 1756.0,188.1 1734.3,182.0 1712.6,174.9 1690.9,184.3 1669.2,186.6 1647.5,182.8 1625.8,185.8"/>
<polygon fill="#00695c" fill-opacity="0.2" points="1625.8,158.8 1647.5,158.2 1669.2,160.7 1690.9,158.8 1712.6,159.2 1734.3,159.2 1756.0,161.5 1777.6,158.5 1799.3,157.7 1821.0,159.2 1842.7,157.7 1864.4,155.4 1886.1,157.7 1907.8,157.7 1929.5,157.7 1951.2,158.5 1972.9,159.2 1994.6,155.1 2016.3,156.9 2038.0,158.2 2059.7,158.2 2081.3,158.5 2103.0,156.9 2124.7,157.2 2146.4,153.1 2168.1,151.2 2189.8,156.9 2211.5,155.4 2211.5,165.3 2189.8,165.8 2168.1,156.9 2146.4,160.7 2124.7,169.1 2103.0,167.6 2081.3,169.1 2059.7,169.9 2038.0,169.9 2016.3,162.7 1994.6,163.0 1972.9,169.9 1951.2,171.8 1929.5,169.1 1907.8,168.3 1886.1,165.8 1864.4,161.5 1842.7,166.1 1821.0,171.4 1799.3,168.3 1777.6,169.9 1756.0,173.7 1734.3,168.3 1712.6,166.4 1690.9,169.4 1669.2,172.9 1647.5,168.3 1625.8,169.1"/>
<polygon fill="#7b1fa2" fill-opacity="0.2" points="1625.8,150.1 1647.5,150.1 1669.2,152.4 1690.9,149.3 1712.6,147.8 1734.3,149.6 1756.0,153.1 1777.6,150.1 1799.3,149.3 1821.0,150.9 1842.7,147.8 1864.4,147.5 1886.1,149.3 1907.8,149.0 1929.5,149.0 1951.2,149.3 1972.9,149.6 1994.6,145.5 2016.3,148.1 2038.0,149.0 2059.7,149.0 2081.3,148.6 2103.0,148.1 2124.7,149.0 2146.4,144.5 2168.1,143.6 2189.8,147.8 2211.5,147.0 2211.5,155.4 2189.8,156.9 2168.1,151.2 2146.4,153.1 2124.7,157.2 2103.0,156.9 2081.3,158.5 2059.7,158.2 2038.0,158.2 2016.3,156.9 1994.6,155.1 1972.9,159.2 1951.2,158.5 1929.5,157.7 1907.8,157.7 1886.1,157.7 1864.4,155.4 1842.7,157.7 1821.0,159.2 1799.3,157.7 1777.6,158.5 1756.0,161.5 1734.3,159.2 1712.6,159.2 1690.9,158.8 1669.2,160.7 1647.5,158.2 1625.8,158.8"/>
<polygon fill="#880e4f" fill-opacity="0.2" points="1625.8,144.5 1647.5,144.0 1669.2,144.8 1690.9,142.9 1712.6,140.2 1734.3,142.9 1756.0,146.3 1777.6,144.5 1799.3,142.9 1821.0,144.8 1842.7,142.0 1864.4,141.0 1886.1,143.2 1907.8,143.6 1929.5,143.2 1951.2,143.6 1972.9,143.6 1994.6,139.4 2016.3,141.4 2038.0,142.5 2059.7,142.9 2081.3,142.5 2103.0,142.0 2124.7,142.9 2146.4,140.2 2168.1,139.0 2189.8,142.0 2211.5,141.0 2211.5,147.0 2189.8,147.8 2168.1,143.6 2146.4,144.5 2124.7,149.0 2103.0,148.1 2081.3,148.6 2059.7,149.0 2038.0,149.0 2016.3,148.1 1994.6,145.5 1972.9,149.6 1951.2,149.3 1929.5,149.0 1907.8,149.0 1886.1,149.3 1864.4,147.5 1842.7,147.8 1821.0,150.9 1799.3,149.3 1777.6,150.1 1756.0,153.1 1734.3,149.6 1712.6,147.8 1690.9,149.3 1669.2,152.4 1647.5,150.1 1625.8,150.1"/>
<polygon fill="#388e3c" fill-opacity="0.2" points="1625.8,137.9 1647.5,138.4 1669.2,139.0 1690.9,137.9 1712.6,135.9 1734.3,137.5 1756.0,139.0 1777.6,138.4 1799.3,137.2 1821.0,139.4 1842.7,137.5 1864.4,135.9 1886.1,137.9 1907.8,138.4 1929.5,138.4 1951.2,138.7 1972.9,138.7 1994.6,135.9 2016.3,136.9 2038.0,137.9 2059.7,137.9 2081.3,137.9 2103.0,137.9 2124.7,138.4 2146.4,136.9 2168.1,135.9 2189.8,137.2 2211.5,136.9 2211.5,141.0 2189.8,142.0 2168.1,139.0 2146.4,140.2 2124.7,142.9 2103.0,142.0 2081.3,142.5 2059.7,142.9 2038.0,142.5 2016.3,141.4 1994.6,139.4 1972.9,143.6 1951.2,143.6 1929.5,143.2 1907.8,143.6 1886.1,143.2 1864.4,141.0 1842.7,142.0 1821.0,144.8 1799.3,142.9 1777.6,144.5 1756.0,146.3 1734.3,142.9 1712.6,140.2 1690.9,142.9 1669.2,144.8 1647.5,144.0 1625.8,144.5"/>
<polygon fill="#d32f2f" fill-opacity="0.2" points="1625.8,134.0 1647.5,134.0 1669.2,134.0 1690.9,134.0 1712.6,134.0 1734.3,134.0 1756.0,134.0 1777.6,134.0 1799.3,134.0 1821.0,134.0 1842.7,134.0 1864.4,134.0 1886.1,134.0 1907.8,134.0 1929.5,134.0 1951.2,134.0 1972.9,134.0 1994.6,134.0 2016.3,134.0 2038.0,134.0 2059.7,134.0 2081.3,134.0 2103.0,134.0 2124.7,134.0 2146.4,134.0 2168.1,134.0 2189.8,134.0 2211.5,134.0 2211.5,136.9 2189.8,137.2 2168.1,135.9 2146.4,136.9 2124.7,138.4 2103.0,137.9 2081.3,137.9 2059.7,137.9 2038.0,137.9 2016.3,136.9 1994.6,135.9 1972.9,138.7 1951.2,138.7 1929.5,138.4 1907.8,138.4 1886.1,137.9 1864.4,135.9 1842.7,137.5 1821.0,139.4 1799.3,137.2 1777.6,138.4 1756.0,139.0 1734.3,137.5 1712.6,135.9 1690.9,137.9 1669.2,139.0 1647.5,138.4 1625.8,137.9"/>
<g stroke="#ffffff" stroke-opacity="0.055" stroke-width="1.4">
<line x1="1712.6" y1="134.0" x2="1712.6" y2="458.6"/>
<line x1="1799.3" y1="134.0" x2="1799.3" y2="458.6"/>
<line x1="1886.1" y1="134.0" x2="1886.1" y2="458.6"/>
<line x1="1972.9" y1="134.0" x2="1972.9" y2="458.6"/>
<line x1="2059.7" y1="134.0" x2="2059.7" y2="458.6"/>
<line x1="2146.4" y1="134.0" x2="2146.4" y2="458.6"/>
<line x1="1625.8" y1="166.5" x2="2211.8" y2="166.5"/>
<line x1="1625.8" y1="198.9" x2="2211.8" y2="198.9"/>
<line x1="1625.8" y1="231.4" x2="2211.8" y2="231.4"/>
<line x1="1625.8" y1="263.8" x2="2211.8" y2="263.8"/>
<line x1="1625.8" y1="296.3" x2="2211.8" y2="296.3"/>
<line x1="1625.8" y1="328.8" x2="2211.8" y2="328.8"/>
<line x1="1625.8" y1="361.2" x2="2211.8" y2="361.2"/>
<line x1="1625.8" y1="393.7" x2="2211.8" y2="393.7"/>
<line x1="1625.8" y1="426.1" x2="2211.8" y2="426.1"/>
</g>
<polyline fill="none" stroke="#1a7fe0" stroke-opacity="0.42" stroke-width="2.4" points="1625.8,458.4 1647.5,458.4 1669.2,458.4 1690.9,458.4 1712.6,458.4 1734.3,458.4 1756.0,458.4 1777.6,458.4 1799.3,458.4 1821.0,451.9 1842.7,404.6 1864.4,401.3 1886.1,398.0 1907.8,413.1 1929.5,403.6 1951.2,396.9 1972.9,391.7 1994.6,370.4 2016.3,382.5 2038.0,389.8 2059.7,389.4 2081.3,379.5 2103.0,377.2 2124.7,373.1 2146.4,353.3 2168.1,361.2 2189.8,375.7 2211.5,368.1"/>
<polyline fill="none" stroke="#fbb015" stroke-opacity="0.44" stroke-width="2.4" points="1625.8,358.5 1647.5,355.5 1669.2,356.7 1690.9,341.2 1712.6,337.2 1734.3,348.8 1756.0,352.1 1777.6,349.1 1799.3,345.7 1821.0,343.8 1842.7,313.3 1864.4,314.9 1886.1,320.2 1907.8,342.7 1929.5,338.1 1951.2,339.6 1972.9,336.2 1994.6,311.1 2016.3,321.7 2038.0,336.9 2059.7,335.4 2081.3,330.1 2103.0,327.5 2124.7,327.5 2146.4,303.2 2168.1,308.0 2189.8,329.3 2211.5,323.2"/>
<polyline fill="none" stroke="#f57c00" stroke-opacity="0.46" stroke-width="2.4" points="1625.8,312.6 1647.5,310.8 1669.2,312.9 1690.9,306.5 1712.6,292.5 1734.3,305.3 1756.0,310.3 1777.6,308.8 1799.3,306.2 1821.0,306.5 1842.7,276.4 1864.4,284.0 1886.1,281.4 1907.8,301.2 1929.5,297.1 1951.2,300.4 1972.9,298.1 1994.6,272.3 2016.3,279.1 2038.0,297.7 2059.7,296.2 2081.3,295.1 2103.0,291.0 2124.7,291.6 2146.4,268.9 2168.1,267.9 2189.8,295.1 2211.5,289.5"/>
<polyline fill="none" stroke="#795548" stroke-opacity="0.3" stroke-width="2.4" points="1625.8,287.0 1647.5,284.4 1669.2,289.5 1690.9,280.6 1712.6,266.1 1734.3,276.8 1756.0,282.9 1777.6,282.5 1799.3,277.6 1821.0,276.8 1842.7,253.5 1864.4,260.3 1886.1,255.5 1907.8,276.1 1929.5,272.3 1951.2,276.1 1972.9,275.3 1994.6,247.9 2016.3,254.3 2038.0,273.3 2059.7,272.3 2081.3,271.8 2103.0,270.0 2124.7,271.2 2146.4,249.7 2168.1,247.9 2189.8,271.8 2211.5,266.4"/>
<polyline fill="none" stroke="#424242" stroke-opacity="0.3" stroke-width="2.4" points="1625.8,260.3 1647.5,259.6 1669.2,261.1 1690.9,250.5 1712.6,242.1 1734.3,249.7 1756.0,255.8 1777.6,257.3 1799.3,252.7 1821.0,251.2 1842.7,234.5 1864.4,236.8 1886.1,233.0 1907.8,252.0 1929.5,249.7 1951.2,252.7 1972.9,254.3 1994.6,227.6 2016.3,229.9 2038.0,251.2 2059.7,250.5 2081.3,250.5 2103.0,248.2 2124.7,247.4 2146.4,229.9 2168.1,228.4 2189.8,249.7 2211.5,244.4"/>
<polyline fill="none" stroke="#546e7a" stroke-opacity="0.3" stroke-width="2.4" points="1625.8,238.3 1647.5,237.5 1669.2,241.3 1690.9,226.9 1712.6,216.2 1734.3,229.9 1756.0,238.3 1777.6,236.8 1799.3,231.4 1821.0,230.7 1842.7,216.2 1864.4,213.2 1886.1,212.9 1907.8,229.2 1929.5,228.4 1951.2,231.4 1972.9,233.7 1994.6,207.9 2016.3,207.9 2038.0,230.2 2059.7,230.2 2081.3,230.7 2103.0,229.6 2124.7,229.6 2146.4,211.7 2168.1,208.9 2189.8,229.2 2211.5,226.6"/>
<polyline fill="none" stroke="#afb42b" stroke-opacity="0.3" stroke-width="2.4" points="1625.8,219.3 1647.5,217.0 1669.2,221.1 1690.9,215.0 1712.6,201.3 1734.3,212.0 1756.0,217.8 1777.6,217.5 1799.3,212.9 1821.0,214.7 1842.7,204.1 1864.4,195.7 1886.1,195.7 1907.8,210.5 1929.5,209.4 1951.2,214.4 1972.9,216.2 1994.6,195.7 2016.3,191.9 2038.0,212.4 2059.7,212.4 2081.3,212.9 2103.0,211.4 2124.7,211.7 2146.4,195.0 2168.1,193.4 2189.8,208.6 2211.5,207.9"/>
<polyline fill="none" stroke="#0288d1" stroke-opacity="0.3" stroke-width="2.4" points="1625.8,199.5 1647.5,197.7 1669.2,200.7 1690.9,197.2 1712.6,185.5 1734.3,195.0 1756.0,201.8 1777.6,199.5 1799.3,197.2 1821.0,198.0 1842.7,195.3 1864.4,184.3 1886.1,182.0 1907.8,192.7 1929.5,193.4 1951.2,195.7 1972.9,198.0 1994.6,183.5 2016.3,179.4 2038.0,195.3 2059.7,195.3 2081.3,195.3 2103.0,193.7 2124.7,193.4 2146.4,183.5 2168.1,177.5 2189.8,192.7 2211.5,191.1"/>
<polyline fill="none" stroke="#689f38" stroke-opacity="0.3" stroke-width="2.4" points="1625.8,185.8 1647.5,182.8 1669.2,186.6 1690.9,184.3 1712.6,174.9 1734.3,182.0 1756.0,188.1 1777.6,185.8 1799.3,183.5 1821.0,186.6 1842.7,181.3 1864.4,170.3 1886.1,174.4 1907.8,181.6 1929.5,182.5 1951.2,183.5 1972.9,183.5 1994.6,176.7 2016.3,171.4 2038.0,181.6 2059.7,182.0 2081.3,182.0 2103.0,181.0 2124.7,181.0 2146.4,169.4 2168.1,167.3 2189.8,179.0 2211.5,178.2"/>
<polyline fill="none" stroke="#c2185b" stroke-opacity="0.27" stroke-width="2.4" points="1625.8,169.1 1647.5,168.3 1669.2,172.9 1690.9,169.4 1712.6,166.4 1734.3,168.3 1756.0,173.7 1777.6,169.9 1799.3,168.3 1821.0,171.4 1842.7,166.1 1864.4,161.5 1886.1,165.8 1907.8,168.3 1929.5,169.1 1951.2,171.8 1972.9,169.9 1994.6,163.0 2016.3,162.7 2038.0,169.9 2059.7,169.9 2081.3,169.1 2103.0,167.6 2124.7,169.1 2146.4,160.7 2168.1,156.9 2189.8,165.8 2211.5,165.3"/>
<polyline fill="none" stroke="#00695c" stroke-opacity="0.2" stroke-width="2.4" points="1625.8,158.8 1647.5,158.2 1669.2,160.7 1690.9,158.8 1712.6,159.2 1734.3,159.2 1756.0,161.5 1777.6,158.5 1799.3,157.7 1821.0,159.2 1842.7,157.7 1864.4,155.4 1886.1,157.7 1907.8,157.7 1929.5,157.7 1951.2,158.5 1972.9,159.2 1994.6,155.1 2016.3,156.9 2038.0,158.2 2059.7,158.2 2081.3,158.5 2103.0,156.9 2124.7,157.2 2146.4,153.1 2168.1,151.2 2189.8,156.9 2211.5,155.4"/>
<polyline fill="none" stroke="#7b1fa2" stroke-opacity="0.38" stroke-width="2.4" points="1625.8,150.1 1647.5,150.1 1669.2,152.4 1690.9,149.3 1712.6,147.8 1734.3,149.6 1756.0,153.1 1777.6,150.1 1799.3,149.3 1821.0,150.9 1842.7,147.8 1864.4,147.5 1886.1,149.3 1907.8,149.0 1929.5,149.0 1951.2,149.3 1972.9,149.6 1994.6,145.5 2016.3,148.1 2038.0,149.0 2059.7,149.0 2081.3,148.6 2103.0,148.1 2124.7,149.0 2146.4,144.5 2168.1,143.6 2189.8,147.8 2211.5,147.0"/>
<polyline fill="none" stroke="#880e4f" stroke-opacity="0.3" stroke-width="2.4" points="1625.8,144.5 1647.5,144.0 1669.2,144.8 1690.9,142.9 1712.6,140.2 1734.3,142.9 1756.0,146.3 1777.6,144.5 1799.3,142.9 1821.0,144.8 1842.7,142.0 1864.4,141.0 1886.1,143.2 1907.8,143.6 1929.5,143.2 1951.2,143.6 1972.9,143.6 1994.6,139.4 2016.3,141.4 2038.0,142.5 2059.7,142.9 2081.3,142.5 2103.0,142.0 2124.7,142.9 2146.4,140.2 2168.1,139.0 2189.8,142.0 2211.5,141.0"/>
<polyline fill="none" stroke="#388e3c" stroke-opacity="0.32" stroke-width="2.4" points="1625.8,137.9 1647.5,138.4 1669.2,139.0 1690.9,137.9 1712.6,135.9 1734.3,137.5 1756.0,139.0 1777.6,138.4 1799.3,137.2 1821.0,139.4 1842.7,137.5 1864.4,135.9 1886.1,137.9 1907.8,138.4 1929.5,138.4 1951.2,138.7 1972.9,138.7 1994.6,135.9 2016.3,136.9 2038.0,137.9 2059.7,137.9 2081.3,137.9 2103.0,137.9 2124.7,138.4 2146.4,136.9 2168.1,135.9 2189.8,137.2 2211.5,136.9"/>
<polyline fill="none" stroke="#d32f2f" stroke-opacity="0.45" stroke-width="2.4" points="1625.8,134.0 1647.5,134.0 1669.2,134.0 1690.9,134.0 1712.6,134.0 1734.3,134.0 1756.0,134.0 1777.6,134.0 1799.3,134.0 1821.0,134.0 1842.7,134.0 1864.4,134.0 1886.1,134.0 1907.8,134.0 1929.5,134.0 1951.2,134.0 1972.9,134.0 1994.6,134.0 2016.3,134.0 2038.0,134.0 2059.7,134.0 2081.3,134.0 2103.0,134.0 2124.7,134.0 2146.4,134.0 2168.1,134.0 2189.8,134.0 2211.5,134.0"/>
<circle cx="1799.3" cy="458.4" r="6" fill="#1a7fe0" fill-opacity="0.2"/>
<circle cx="1799.3" cy="345.7" r="6" fill="#fbb015" fill-opacity="0.2"/>
<circle cx="1799.3" cy="306.2" r="6" fill="#f57c00" fill-opacity="0.2"/>
<circle cx="1799.3" cy="277.6" r="6" fill="#795548" fill-opacity="0.2"/>
<circle cx="1799.3" cy="252.7" r="6" fill="#424242" fill-opacity="0.2"/>
<circle cx="1799.3" cy="231.4" r="6" fill="#546e7a" fill-opacity="0.2"/>
<circle cx="1799.3" cy="212.9" r="6" fill="#afb42b" fill-opacity="0.2"/>
<circle cx="1799.3" cy="197.2" r="6" fill="#0288d1" fill-opacity="0.2"/>
<circle cx="1799.3" cy="183.5" r="6" fill="#689f38" fill-opacity="0.2"/>
<circle cx="1799.3" cy="168.3" r="6" fill="#c2185b" fill-opacity="0.2"/>
<circle cx="1799.3" cy="157.7" r="6" fill="#00695c" fill-opacity="0.2"/>
<circle cx="1799.3" cy="149.3" r="6" fill="#7b1fa2" fill-opacity="0.2"/>
<circle cx="1799.3" cy="142.9" r="6" fill="#880e4f" fill-opacity="0.2"/>
<circle cx="1799.3" cy="137.2" r="6" fill="#388e3c" fill-opacity="0.2"/>
<circle cx="1799.3" cy="134.0" r="6" fill="#d32f2f" fill-opacity="0.2"/>
<g stroke="#cfcfcf" stroke-width="2"><line x1="1625.8" y1="132.7" x2="1625.8" y2="459.6"/><line x1="1624.8" y1="458.6" x2="2211.8" y2="458.6"/></g>
<rect x="1624.9" y="85.6" width="34.8" height="6.8" fill="#1a7fe0" fill-opacity="0.30"/>
<line x1="1624.9" y1="84.1" x2="1659.7" y2="84.1" stroke="#1a7fe0" stroke-opacity="1" stroke-width="3.2"/>
<text x="1665.9" y="90.2" font-size="17.0" text-anchor="start" fill="#c3c3c3" textLength="37.6" lengthAdjust="spacingAndGlyphs">6.1.0</text>
<rect x="1731" y="85.6" width="34.8" height="6.8" fill="#fbb015" fill-opacity="0.30"/>
<line x1="1731" y1="84.1" x2="1765.8" y2="84.1" stroke="#fbb015" stroke-opacity="1" stroke-width="3.2"/>
<text x="1772.0" y="90.2" font-size="17.0" text-anchor="start" fill="#c3c3c3" textLength="37.6" lengthAdjust="spacingAndGlyphs">6.0.1</text>
<rect x="1837.2" y="85.6" width="34.8" height="6.8" fill="#f57c00" fill-opacity="0.30"/>
<line x1="1837.2" y1="84.1" x2="1872.0" y2="84.1" stroke="#f57c00" stroke-opacity="1" stroke-width="3.2"/>
<text x="1878.2" y="90.2" font-size="17.0" text-anchor="start" fill="#c3c3c3" textLength="37.6" lengthAdjust="spacingAndGlyphs">5.1.0</text>
<rect x="1943.1" y="85.6" width="34.8" height="6.8" fill="#795548" fill-opacity="0.17"/>
<line x1="1943.1" y1="84.1" x2="1977.8999999999999" y2="84.1" stroke="#795548" stroke-opacity="0.55" stroke-width="3.2"/>
<text x="1984.1" y="90.2" font-size="17.0" text-anchor="start" fill="#c3c3c3" textLength="37.6" lengthAdjust="spacingAndGlyphs">4.1.0</text>
<rect x="1624.9" y="113.6" width="34.8" height="6.8" fill="#4a4a4a" fill-opacity="0.21"/>
<line x1="1624.9" y1="112.1" x2="1659.7" y2="112.1" stroke="#4a4a4a" stroke-opacity="0.7" stroke-width="3.2"/>
<text x="1665.9" y="118.2" font-size="17.0" text-anchor="start" fill="#c3c3c3" textLength="37.6" lengthAdjust="spacingAndGlyphs">5.0.0</text>
<rect x="1731" y="113.6" width="34.8" height="6.8" fill="#546e7a" fill-opacity="0.18"/>
<line x1="1731" y1="112.1" x2="1765.8" y2="112.1" stroke="#546e7a" stroke-opacity="0.6" stroke-width="3.2"/>
<text x="1772.0" y="118.2" font-size="17.0" text-anchor="start" fill="#c3c3c3" textLength="37.6" lengthAdjust="spacingAndGlyphs">4.0.0</text>
<rect x="1837.2" y="113.6" width="34.8" height="6.8" fill="#afb42b" fill-opacity="0.30"/>
<line x1="1837.2" y1="112.1" x2="1872.0" y2="112.1" stroke="#afb42b" stroke-opacity="1" stroke-width="3.2"/>
<text x="1878.2" y="118.2" font-size="17.0" text-anchor="start" fill="#c3c3c3" textLength="47.2" lengthAdjust="spacingAndGlyphs">1.23.0</text>
<rect x="1954.2" y="113.6" width="34.8" height="6.8" fill="#0288d1" fill-opacity="0.30"/>
<line x1="1954.2" y1="112.1" x2="1989.0" y2="112.1" stroke="#0288d1" stroke-opacity="1" stroke-width="3.2"/>
<text x="1995.2" y="118.2" font-size="17.0" text-anchor="start" fill="#c3c3c3" textLength="37.6" lengthAdjust="spacingAndGlyphs">3.0.0</text>
<path d="M2189.1 88.9v18l-18-9z" fill="#cdcdcd"/><path d="M2194.8 88.9v18l17.3-9z" fill="#bebebe"/>
<text x="1608.3" y="139.6" font-size="18.6" text-anchor="end" fill="#c3c3c3" textLength="45.0" lengthAdjust="spacingAndGlyphs">100%</text>
<text x="1608.3" y="204.5" font-size="18.6" text-anchor="end" fill="#c3c3c3" textLength="34.5" lengthAdjust="spacingAndGlyphs">80%</text>
<text x="1608.3" y="269.4" font-size="18.6" text-anchor="end" fill="#c3c3c3" textLength="34.5" lengthAdjust="spacingAndGlyphs">60%</text>
<text x="1608.3" y="334.4" font-size="18.6" text-anchor="end" fill="#c3c3c3" textLength="34.5" lengthAdjust="spacingAndGlyphs">40%</text>
<text x="1608.3" y="399.3" font-size="18.6" text-anchor="end" fill="#c3c3c3" textLength="34.5" lengthAdjust="spacingAndGlyphs">20%</text>
<text x="1608.3" y="464.2" font-size="18.6" text-anchor="end" fill="#c3c3c3" textLength="24.1" lengthAdjust="spacingAndGlyphs">0%</text>
<text x="1625.8" y="486.0" font-size="18.6" text-anchor="middle" fill="#c3c3c3" textLength="107.4" lengthAdjust="spacingAndGlyphs">Dec 20, 2023</text>
<text x="1712.6" y="510.8" font-size="18.6" text-anchor="middle" fill="#c3c3c3" textLength="107.4" lengthAdjust="spacingAndGlyphs">Dec 24, 2023</text>
<text x="1799.3" y="486.0" font-size="18.6" text-anchor="middle" fill="#c3c3c3" textLength="107.4" lengthAdjust="spacingAndGlyphs">Dec 28, 2023</text>
<text x="1886.1" y="510.8" font-size="18.6" text-anchor="middle" fill="#c3c3c3" textLength="95.8" lengthAdjust="spacingAndGlyphs">Jan 1, 2024</text>
<text x="1972.9" y="486.0" font-size="18.6" text-anchor="middle" fill="#c3c3c3" textLength="95.8" lengthAdjust="spacingAndGlyphs">Jan 5, 2024</text>
<text x="2059.7" y="510.8" font-size="18.6" text-anchor="middle" fill="#c3c3c3" textLength="95.8" lengthAdjust="spacingAndGlyphs">Jan 9, 2024</text>
<text x="2146.4" y="486.0" font-size="18.6" text-anchor="middle" fill="#c3c3c3" textLength="106.3" lengthAdjust="spacingAndGlyphs">Jan 13, 2024</text>
</svg>
<svg width="560" height="270" viewBox="1690 550 560 270" style="left:1690px;top:550px">
<defs><linearGradient id="lg1" x1="0" x2="1" y1="0" y2="0"><stop offset="0" stop-color="#d6e7f8"/><stop offset="1" stop-color="#1a73d9"/></linearGradient></defs>
<g stroke="#d3dae2" stroke-width="0.8" stroke-linejoin="round">
<polygon fill="#c4dcf4" points="1786.9,636.5 1792.1,638.2 1799.4,635.3 1803.5,636.8 1810.8,638.2 1813.9,641.0 1820.1,641.0 1824.3,639.6 1828.5,641.0 1832.6,639.6 1834.7,630.7 1837.8,635.3 1839.9,639.6 1844.0,636.8 1848.2,636.8 1849.2,642.3 1844.0,646.1 1843.0,649.8 1837.8,653.2 1835.2,658.5 1835.7,662.1 1837.3,665.4 1842.0,666.3 1845.1,668.4 1847.9,669.0 1848.2,672.4 1850.8,674.9 1851.3,670.7 1853.4,666.3 1852.4,661.9 1852.9,654.3 1856.5,654.7 1860.7,657.5 1861.2,661.5 1864.8,662.5 1866.4,658.9 1870.0,666.3 1874.2,671.6 1875.2,674.1 1871.1,676.8 1864.3,677.0 1861.2,680.7 1865.9,678.5 1866.4,681.1 1870.0,683.3 1866.9,685.5 1864.8,686.6 1863.8,684.5 1863.0,681.9 1861.5,681.3 1859.6,684.8 1855.8,684.8 1853.9,686.2 1851.3,686.9 1851.3,687.9 1847.7,688.9 1847.2,684.1 1845.6,682.6 1841.4,680.1 1839.9,680.4 1834.7,678.8 1805.6,678.8 1803.5,677.3 1800.4,674.1 1797.8,669.0 1793.1,660.6 1791.1,661.7 1786.9,658.9"/>
<polygon fill="#c4dcf4" points="1871.8,680.8 1875.7,674.9 1878.6,681.1 1875.2,682.2"/>
<polygon fill="#4a90dd" points="1805.6,678.8 1834.7,678.8 1839.9,680.4 1841.4,680.1 1845.6,682.6 1847.2,684.1 1847.7,688.9 1851.3,687.9 1851.3,686.9 1853.9,686.2 1855.8,684.8 1859.6,684.8 1861.5,681.3 1863.0,681.9 1863.8,684.5 1860.7,686.6 1859.9,688.9 1856.5,690.8 1855.0,694.2 1854.4,698.0 1851.8,699.5 1849.2,702.2 1850.3,707.7 1849.8,709.5 1848.4,708.6 1847.4,705.7 1846.1,704.0 1844.0,703.6 1840.4,703.8 1840.4,704.9 1835.9,704.3 1832.6,706.3 1832.3,708.6 1830.0,706.9 1828.5,704.3 1826.4,705.2 1824.8,704.3 1822.7,701.9 1821.0,701.9 1821.0,702.5 1818.1,702.5 1814.1,701.0 1811.7,701.0 1810.3,699.2 1808.1,698.5 1806.6,696.0 1804.8,692.3 1804.3,688.9 1804.6,683.3 1803.8,679.8"/>
<polygon fill="#4a90dd" points="1786.9,636.5 1786.9,658.9 1791.1,661.7 1793.1,660.6 1797.8,669.0 1796.3,669.0 1794.2,664.4 1791.1,662.5 1787.9,660.2 1783.8,659.5 1779.6,658.5 1776.0,660.9 1773.4,663.5 1769.2,666.3 1765.1,669.0 1762.0,670.2 1758.8,671.9 1760.9,670.4 1765.1,667.2 1769.2,662.5 1765.1,661.5 1762.0,658.5 1760.9,655.4 1766.1,652.1 1766.1,649.8 1760.9,649.8 1758.8,647.1 1763.0,644.9 1765.1,644.9 1760.4,640.1 1764.0,638.2 1770.3,631.7 1775.5,632.9 1781.7,634.7"/>
<polygon fill="#a6caef" points="1811.7,701.0 1814.1,701.0 1818.1,702.5 1821.0,702.5 1821.0,701.9 1822.7,701.9 1824.8,704.3 1826.4,705.2 1828.5,704.3 1830.0,706.9 1832.3,708.6 1831.8,712.5 1833.7,716.2 1835.2,717.1 1838.3,716.8 1839.4,714.1 1843.0,713.5 1842.5,716.8 1841.7,716.8 1840.7,717.5 1838.9,718.2 1839.4,719.4 1837.6,721.0 1835.7,719.2 1832.6,719.6 1829.5,718.4 1825.3,716.2 1823.8,714.6 1823.8,712.5 1820.1,709.1 1816.5,704.6 1814.2,702.2 1814.4,704.0 1818.1,709.7 1819.6,711.9 1817.0,710.3 1813.9,706.3"/>
<polygon fill="#b4d3f1" points="1837.6,721.0 1839.4,719.4 1838.9,718.2 1840.7,717.5 1841.7,716.8 1841.8,719.4 1846.1,719.6 1847.0,720.5 1846.3,724.6 1847.7,726.2 1850.8,726.2 1853.1,727.0 1852.6,728.5 1850.3,728.4 1849.2,727.7 1847.2,727.4 1844.4,725.6 1844.4,724.4 1842.5,722.5 1839.9,721.7"/>
<polygon fill="#f0f0f0" points="1845.1,713.0 1850.3,711.9 1855.5,714.6 1856.3,715.0 1852.9,715.3 1852.4,714.4 1848.2,712.6"/>
<polygon fill="#f0f0f0" points="1856.1,715.4 1861.7,715.7 1862.3,716.8 1859.1,717.6 1856.1,716.9"/>
<polygon fill="#f0f0f0" points="1857.6,604.4 1862.7,594.7 1871.1,581.8 1886.6,578.0 1902.2,569.7 1912.6,581.8 1920.9,585.3 1914.7,594.7 1915.2,610.0 1911.6,618.4 1912.6,629.1 1908.5,635.3 1910.0,634.7 1905.3,640.1 1899.6,641.5 1895.0,646.9 1891.3,649.8 1888.7,659.1 1886.1,659.1 1883.0,656.4 1879.9,650.9 1877.8,643.6 1880.4,636.8 1876.8,632.9 1876.3,625.7 1872.6,616.4 1864.8,614.4 1859.6,610.0"/>
<polygon fill="#c4dcf4" points="1908.2,647.1 1910.5,645.1 1916.8,644.9 1919.3,648.1 1914.2,652.3 1910.0,651.2"/>
<polygon fill="#b4d3f1" points="1853.1,727.0 1855.0,724.8 1858.6,723.4 1859.1,724.8 1860.7,723.6 1862.7,725.1 1866.9,725.1 1869.0,724.9 1871.1,727.2 1874.2,729.7 1877.3,729.9 1879.9,731.6 1881.5,734.0 1881.5,735.8 1883.5,736.6 1887.2,738.1 1891.8,738.6 1895.0,740.7 1897.0,741.4 1897.2,743.4 1895.0,747.0 1892.9,749.6 1892.9,753.8 1890.8,758.6 1887.2,759.9 1883.0,762.8 1882.8,765.9 1879.4,770.6 1877.8,772.0 1876.3,773.6 1874.2,773.0 1872.6,772.4 1874.2,775.5 1873.4,777.6 1869.0,778.7 1868.7,781.0 1865.9,781.3 1867.1,783.7 1865.6,786.8 1863.3,788.3 1865.0,790.5 1861.7,795.1 1862.2,798.0 1865.7,802.3 1862.2,803.2 1859.1,800.9 1856.0,797.5 1855.0,791.2 1856.5,785.4 1857.0,778.7 1857.0,776.1 1859.1,771.2 1859.1,766.4 1860.4,761.9 1860.5,754.8 1858.1,753.2 1854.2,750.1 1851.8,746.0 1848.9,740.9 1850.3,738.8 1849.4,736.8 1850.3,735.0 1851.5,734.3 1853.1,731.8 1852.9,728.7 1852.6,728.5"/>
<polygon fill="#a6caef" points="1853.1,727.0 1855.0,724.8 1858.6,723.4 1858.1,725.1 1858.6,728.5 1863.3,729.7 1863.8,734.0 1860.7,734.0 1861.2,736.8 1860.7,740.1 1857.6,738.1 1855.0,735.8 1851.5,734.3 1853.1,731.8 1852.9,728.7"/>
<polygon fill="#a6caef" points="1864.8,758.6 1868.5,758.8 1873.1,761.9 1876.7,762.5 1877.5,764.2 1875.4,765.5 1873.6,767.8 1872.9,771.2 1872.6,772.4 1874.2,775.5 1873.4,777.6 1869.0,778.7 1868.7,781.0 1865.9,781.3 1867.1,783.7 1865.6,786.8 1863.3,788.3 1865.0,790.5 1861.7,795.1 1862.2,798.0 1859.1,797.5 1858.1,792.8 1859.1,785.4 1859.6,778.7 1860.7,772.4 1860.9,767.6 1862.2,764.2 1863.8,759.7"/>
<polygon fill="#b4d3f1" points="1860.5,754.8 1861.7,755.9 1862.7,759.7 1862.2,764.2 1860.9,767.6 1860.7,772.4 1859.6,778.7 1859.1,785.4 1858.1,792.8 1859.1,797.5 1862.2,798.0 1865.7,802.3 1862.2,803.2 1859.1,800.9 1856.0,797.5 1855.0,791.2 1856.5,785.4 1857.0,778.7 1857.0,776.1 1859.1,771.2 1859.1,766.4 1860.4,761.9"/>
<polygon fill="#1b72d6" points="1879.9,731.6 1881.5,734.0 1881.5,735.8 1883.5,736.6 1887.2,738.1 1891.8,738.6 1895.0,740.7 1897.0,741.4 1897.2,743.4 1895.0,747.0 1892.9,749.6 1892.9,753.8 1890.8,758.6 1887.2,759.9 1883.0,762.8 1882.8,765.9 1879.4,770.6 1877.8,772.0 1873.6,767.8 1875.4,765.5 1877.5,764.2 1876.7,762.5 1877.0,760.8 1875.7,760.8 1873.1,758.6 1873.1,756.4 1873.7,754.3 1871.1,752.4 1870.9,749.8 1865.6,747.0 1865.6,745.8 1862.0,747.0 1860.2,747.0 1860.0,745.4 1857.6,745.3 1856.7,743.2 1857.7,741.1 1860.7,740.1 1861.2,736.8 1860.7,734.0 1863.8,734.0 1864.0,734.6 1866.9,733.8 1867.4,731.8 1870.2,730.5 1871.1,730.7 1872.1,734.4 1874.7,733.8 1877.3,733.6 1878.9,733.3"/>
<polygon fill="#f0f0f0" points="1874.2,729.7 1877.3,729.9 1879.9,731.6 1878.9,733.3 1877.3,733.6 1874.7,733.8 1873.1,731.8"/>
<polygon fill="#f0f0f0" points="1870.0,796.4 1873.1,796.4 1872.6,798.0 1870.0,797.9"/>
<polygon fill="#b4d3f1" points="1923.5,695.5 1924.0,693.6 1923.7,687.6 1931.5,687.0 1932.2,683.3 1928.5,679.9 1931.8,679.3 1931.6,677.8 1935.0,677.0 1937.0,675.0 1938.3,672.4 1940.7,671.6 1942.4,670.7 1942.0,665.4 1944.3,664.0 1944.1,668.1 1944.8,670.7 1947.9,670.7 1952.6,669.5 1955.2,669.0 1955.2,665.4 1958.6,664.4 1957.8,661.1 1962.5,660.6 1964.6,659.5 1962.5,666.3 1965.6,674.1 1968.7,674.1 1972.9,677.3 1975.0,680.4 1973.1,681.7 1969.8,684.1 1968.2,685.5 1967.7,683.3 1965.1,683.0 1963.3,685.5 1962.5,688.9 1963.5,690.0 1960.7,691.0 1958.3,690.6 1957.3,691.4 1958.3,694.2 1957.3,696.1 1955.7,695.5 1953.7,691.0 1953.6,688.9 1949.0,685.5 1947.7,683.9 1946.2,684.3 1946.4,686.2 1949.8,688.9 1952.6,691.4 1950.5,693.6 1949.7,694.2 1950.0,691.6 1946.4,689.6 1944.3,687.6 1942.5,685.6 1939.6,687.4 1936.7,687.3 1936.7,688.9 1933.9,691.0 1932.9,693.8 1931.3,695.8 1927.9,696.6 1926.1,695.4"/>
<polygon fill="#a6caef" points="1923.5,695.5 1924.0,693.6 1923.7,687.6 1931.5,687.0 1936.7,688.4 1936.7,688.9 1933.9,691.0 1932.9,693.8 1931.3,695.8 1927.9,696.6 1926.1,695.4"/>
<polygon fill="#84b5e8" points="1931.5,687.0 1932.2,683.3 1928.5,679.9 1931.8,679.3 1931.6,677.8 1935.0,677.0 1936.0,675.7 1939.6,678.1 1941.9,678.8 1941.3,681.0 1939.6,682.9 1940.7,684.8 1941.2,686.5 1939.6,687.4 1936.7,687.3 1936.7,688.4"/>
<polygon fill="#5e9ee2" points="1936.0,675.7 1937.0,675.0 1938.3,672.4 1940.7,671.6 1939.6,675.7 1939.9,678.1 1939.6,678.1"/>
<polygon fill="#5e9ee2" points="1939.6,675.7 1940.7,671.6 1942.4,670.7 1943.6,669.3 1944.8,670.7 1947.9,670.7 1948.7,675.7 1946.2,676.8 1947.7,679.3 1946.9,681.1 1941.3,681.0 1941.9,678.8 1939.9,678.1"/>
<polygon fill="#92bfeb" points="1940.7,684.8 1940.5,683.3 1944.3,682.2 1947.4,682.6 1947.7,683.9 1946.2,684.3 1946.4,686.2 1949.8,688.9 1952.6,691.4 1950.5,693.6 1949.7,694.2 1950.0,691.6 1946.4,689.6 1944.3,687.6 1942.5,685.6 1941.2,686.5"/>
<polygon fill="#92bfeb" points="1946.4,694.2 1949.6,694.0 1949.2,695.9 1946.4,694.7"/>
<polygon fill="#92bfeb" points="1941.9,690.3 1943.5,690.3 1943.4,692.7 1942.1,692.9"/>
<polygon fill="#a6caef" points="1947.9,670.7 1952.6,669.5 1957.3,670.2 1958.3,675.7 1957.0,678.5 1953.1,678.2 1948.7,675.7"/>
<polygon fill="#c4dcf4" points="1958.3,675.7 1965.6,674.1 1968.7,674.1 1972.9,677.3 1975.0,680.4 1973.1,681.7 1969.8,684.1 1968.2,685.5 1967.7,683.3 1965.1,683.0 1963.3,684.3 1960.9,679.9 1957.0,678.5"/>
<polygon fill="#d6e7f8" points="1957.3,670.2 1962.5,666.8 1965.6,669.0 1965.6,674.1 1958.3,675.7"/>
<polygon fill="#c4dcf4" points="1938.6,662.5 1940.7,663.5 1942.2,662.9 1944.6,661.1 1945.1,662.5 1946.7,667.2 1948.3,668.1 1950.5,666.3 1952.9,660.0 1951.3,657.5 1955.5,650.9 1956.8,646.6 1959.7,648.6 1955.7,657.5 1957.3,659.7 1961.5,658.5 1964.6,659.5 1966.1,654.3 1964.1,646.1 1963.5,638.2 1965.6,635.9 1962.5,632.3 1957.3,633.8 1953.1,635.9 1948.5,642.3 1944.8,649.8 1938.6,655.8"/>
<polygon fill="#b4d3f1" points="1945.1,662.5 1946.7,667.2 1948.3,668.1 1950.5,666.3 1952.9,660.0 1951.3,657.5 1955.5,650.9 1956.8,646.6 1958.1,646.1 1957.8,641.0 1954.7,638.2 1952.1,639.6 1948.5,649.8 1946.1,652.1 1946.4,657.5 1945.3,660.6"/>
<polygon fill="#84b5e8" points="1927.7,677.3 1934.8,675.4 1935.2,672.7 1933.4,671.6 1931.3,667.5 1931.5,664.4 1929.2,664.0 1930.1,662.3 1928.0,662.5 1927.0,666.3 1928.4,669.3 1930.3,670.7 1928.5,672.1 1929.0,673.7 1928.0,674.6 1930.3,675.0"/>
<polygon fill="#a6caef" points="1923.0,674.6 1927.0,673.7 1927.2,670.7 1925.6,668.4 1923.0,670.4"/>
<polygon fill="#92bfeb" points="1964.6,659.5 1962.5,666.3 1965.6,669.0 1965.6,674.1 1968.7,674.1 1972.9,677.3 1975.0,680.4 1973.1,681.7 1971.8,684.3 1974.4,686.9 1983.3,689.6 1982.8,687.6 1982.2,684.8 1984.3,682.6 1983.3,680.4 1982.2,677.3 1986.4,674.9 1990.5,675.7 1996.8,675.7 1996.8,670.7 2005.1,668.6 2007.2,670.4 2012.9,670.7 2016.5,675.7 2021.7,678.1 2024.3,678.5 2029.0,676.2 2035.2,677.3 2039.9,676.5 2043.5,676.8 2050.8,677.6 2055.0,678.1 2057.6,676.8 2059.1,671.9 2064.3,672.4 2069.0,679.1 2073.1,679.9 2069.5,684.8 2069.5,688.3 2071.6,688.0 2079.4,679.6 2079.4,672.4 2076.3,670.7 2079.9,661.5 2088.2,660.6 2094.4,661.5 2096.0,665.4 2095.5,674.9 2099.6,672.4 2102.2,667.2 2103.3,663.5 2103.8,659.5 2110.0,659.5 2119.4,654.3 2120.4,648.6 2125.6,647.4 2125.6,645.6 2125.6,642.3 2120.4,638.2 2110.0,635.3 2099.6,636.2 2089.2,630.7 2078.9,627.4 2068.5,632.3 2066.4,625.7 2050.8,622.9 2042.5,606.8 2035.2,614.4 2023.8,618.4 2016.5,625.7 2009.2,625.7 2008.2,632.3 2004.1,639.6 1995.7,638.2 1989.5,639.6 1979.1,641.0 1979.1,644.9 1975.0,649.8 1969.8,650.2 1972.9,644.9 1976.0,643.6 1967.7,636.8 1965.6,635.9 1963.5,638.2 1964.1,646.1 1966.1,654.3"/>
<polygon fill="#92bfeb" points="2080.9,683.3 2082.5,678.8 2082.0,670.7 2080.9,672.4 2080.9,678.8"/>
<polygon fill="#d6e7f8" points="1960.7,691.0 1963.5,690.0 1967.7,688.9 1971.3,689.9 1976.5,689.6 1983.3,689.6 1984.8,691.0 1984.3,694.9 1989.5,695.5 1988.5,691.0 1988.5,688.9 1986.4,684.8 1988.5,682.2 1984.3,682.6 1983.3,680.4 1982.2,677.3 1986.4,674.9 1990.5,675.7 1996.8,675.7 1996.8,670.7 2005.1,668.6 2007.2,670.4 2012.9,670.7 2016.5,675.7 2021.7,678.1 2024.3,678.5 2029.0,676.2 2035.2,677.3 2039.9,676.5 2043.5,676.8 2050.8,677.6 2055.0,678.1 2057.6,676.8 2059.1,671.9 2064.3,672.4 2069.0,679.1 2073.1,679.9 2069.5,684.8 2069.5,688.3 2068.2,689.6 2065.9,691.9 2067.7,695.5 2067.7,697.6 2064.8,698.7 2064.8,694.9 2063.3,694.2 2062.8,691.6 2059.6,692.9 2060.2,691.0 2056.0,692.9 2057.0,695.1 2060.7,695.5 2057.4,698.0 2060.0,702.8 2060.2,704.6 2057.6,709.1 2054.4,711.9 2051.3,712.7 2048.2,713.8 2046.1,713.2 2044.1,715.2 2043.3,716.5 2046.4,719.9 2047.0,723.6 2044.6,725.1 2042.5,726.9 2042.5,725.4 2040.4,724.6 2039.9,723.4 2038.1,722.2 2037.3,723.6 2036.6,726.4 2037.8,728.2 2040.7,731.8 2041.5,734.4 2040.8,734.4 2038.7,733.0 2037.6,730.2 2035.5,727.7 2035.9,725.1 2034.9,719.9 2033.1,718.9 2031.4,719.4 2031.4,716.8 2029.0,714.1 2028.5,712.5 2026.9,713.0 2024.8,713.3 2023.6,714.6 2021.7,715.7 2018.9,718.9 2016.7,719.9 2016.7,722.5 2016.3,725.3 2013.9,727.6 2012.7,726.2 2011.1,722.5 2009.8,719.4 2009.0,716.2 2009.0,714.1 2006.6,714.3 2005.1,712.7 2003.5,710.8 2002.7,709.4 1997.8,709.5 1992.9,709.0 1992.1,707.4 1989.5,707.9 1986.9,706.5 1985.4,704.0 1983.8,704.0 1983.3,704.6 1985.4,707.8 1986.9,709.1 1987.0,710.6 1989.5,710.6 1991.9,708.3 1992.1,710.3 1994.4,711.4 1995.5,712.5 1994.2,714.7 1993.4,716.2 1990.5,718.4 1987.4,719.8 1984.0,721.5 1980.2,722.8 1978.6,722.9 1977.8,720.5 1977.0,717.8 1973.9,713.8 1973.4,711.4 1969.8,706.3 1969.7,704.6 1969.0,702.5 1970.3,699.5 1970.7,695.9 1969.2,695.9 1966.6,696.6 1965.1,696.4 1962.5,696.0 1960.9,693.6"/>
<polygon fill="#b4d3f1" points="1960.7,691.0 1963.5,690.0 1967.7,688.9 1971.3,689.9 1976.5,689.6 1979.6,692.0 1979.4,695.2 1977.3,695.2 1971.5,695.8 1970.7,695.9 1969.2,695.9 1966.6,696.6 1965.1,696.4 1962.5,696.0 1960.9,693.6"/>
<polygon fill="#b4d3f1" points="1960.7,691.0 1963.5,690.0 1962.5,688.9 1960.7,689.2"/>
<polygon fill="#d6e7f8" points="1984.3,682.6 1983.3,680.4 1982.2,677.3 1986.4,674.9 1990.5,675.7 1996.8,675.7 1996.8,670.7 2005.1,668.6 2007.2,670.4 2012.9,670.7 2016.5,675.7 2021.7,678.1 2024.3,678.5 2022.2,681.6 2019.1,684.3 2017.0,684.8 2016.5,688.9 2010.3,687.6 2006.6,688.9 2004.1,690.3 2002.0,686.9 1996.8,685.8 1994.2,684.1 1991.6,684.8 1991.6,689.9 1988.5,688.9 1986.4,684.8 1988.5,682.2"/>
<polygon fill="#f0f0f0" points="1996.8,697.4 2000.4,696.4 2002.5,695.0 2007.2,693.7 2010.8,695.2 2007.4,696.8 2007.2,699.2 2005.4,701.9 2002.3,704.1 1996.8,704.2 1996.6,699.2"/>
<polygon fill="#f0f0f0" points="1991.6,689.9 1994.2,684.1 1996.8,685.8 2002.0,686.9 2004.1,690.3 2003.0,695.1 2000.4,696.4 1996.8,697.4 1989.5,695.1 1988.5,691.0"/>
<polygon fill="#c4dcf4" points="1996.8,704.2 2002.3,704.1 2005.4,701.9 2007.2,699.2 2007.4,696.8 2010.8,695.2 2014.4,697.4 2010.8,698.2 2010.3,700.4 2011.6,701.3 2010.8,702.8 2009.2,704.6 2007.2,706.5 2006.1,708.0 2007.2,710.3 2004.9,710.5 2004.3,711.2 2003.5,710.8 2002.7,709.4 1997.8,709.5"/>
<polygon fill="#d6e7f8" points="1979.6,692.0 1983.3,692.3 1984.3,694.9 1989.5,695.5 1989.5,695.1 1996.8,697.4 1996.6,699.2 1996.8,704.2 1997.8,709.5 1992.9,709.0 1992.1,707.4 1989.5,707.9 1986.9,706.5 1985.4,704.0 1983.8,704.0 1981.2,700.4 1981.2,697.4 1979.4,695.2"/>
<polygon fill="#d6e7f8" points="1969.7,704.6 1972.9,701.6 1977.0,702.6 1981.7,705.2 1983.3,704.6 1985.4,707.8 1986.9,709.1 1987.0,710.6 1990.5,712.2 1990.5,715.2 1987.4,716.2 1983.3,718.0 1978.6,717.9 1977.8,719.0 1977.0,717.8 1973.9,713.8 1973.4,711.4 1969.8,706.3"/>
<polygon fill="#f0f0f0" points="1977.8,719.0 1978.6,717.9 1983.3,718.0 1987.4,716.2 1988.5,718.7 1987.4,719.8 1984.0,721.5 1980.2,722.8 1978.6,722.9 1977.8,720.5"/>
<polygon fill="#d6e7f8" points="2024.3,678.5 2029.0,676.2 2035.2,677.3 2039.9,676.5 2043.5,676.8 2050.8,677.6 2055.0,678.1 2053.9,680.4 2057.6,682.2 2049.8,684.8 2049.2,686.9 2042.0,689.4 2033.1,687.9 2027.9,684.1"/>
<polygon fill="#d6e7f8" points="2010.0,692.3 2016.5,688.9 2017.0,684.8 2019.1,684.3 2022.2,681.6 2024.3,678.5 2027.9,684.1 2033.1,687.9 2042.0,689.4 2049.2,686.9 2049.8,684.8 2057.6,682.2 2053.9,680.4 2055.0,678.1 2057.6,676.8 2059.1,671.9 2064.3,672.4 2069.0,679.1 2073.1,679.9 2069.5,684.8 2069.5,688.3 2069.0,688.3 2066.4,688.9 2062.5,691.6 2059.6,692.9 2060.2,691.0 2056.0,692.9 2057.0,695.1 2060.7,695.5 2057.4,698.0 2060.0,702.8 2060.2,704.6 2057.6,709.1 2054.4,711.9 2051.3,712.7 2048.2,713.8 2046.1,713.2 2044.4,712.1 2042.8,711.6 2039.6,712.5 2038.7,713.9 2036.8,712.5 2035.9,709.9 2034.7,710.8 2035.7,706.9 2034.2,706.5 2033.1,704.8 2029.0,706.5 2025.7,706.3 2022.8,706.3 2017.6,703.8 2015.3,702.5 2016.0,700.8 2014.4,697.4 2010.8,695.2"/>
<polygon fill="#f0f0f0" points="2062.5,691.6 2066.4,688.9 2069.0,688.3 2068.2,689.6 2065.9,691.9 2066.7,693.5 2064.8,694.5 2063.3,694.2 2062.8,691.6"/>
<polygon fill="#84b5e8" points="2064.8,694.5 2066.7,693.5 2067.7,695.5 2067.7,697.6 2064.8,698.7 2064.8,694.9"/>
<polygon fill="#2c7bd9" points="2004.3,711.2 2005.1,712.7 2006.6,714.3 2009.0,714.1 2009.0,716.2 2009.8,719.4 2011.1,722.5 2012.7,726.2 2013.9,727.6 2016.3,725.3 2016.7,722.5 2016.7,719.9 2018.9,718.9 2021.7,715.7 2023.6,714.6 2024.8,713.3 2025.9,713.0 2025.7,710.5 2026.7,708.6 2029.0,707.7 2029.0,709.7 2030.3,710.8 2031.8,709.2 2034.2,706.5 2033.1,704.8 2029.0,706.5 2025.7,707.2 2024.9,708.1 2020.7,706.9 2016.8,705.4 2017.6,703.8 2015.3,702.5 2016.0,700.8 2014.4,697.4 2010.8,698.2 2010.3,700.4 2011.6,701.3 2010.8,702.8 2009.2,704.6 2007.2,706.5 2006.1,708.0 2007.2,710.3 2004.9,710.5"/>
<polygon fill="#c4dcf4" points="2016.8,705.4 2020.7,706.9 2024.9,708.1 2025.7,706.3 2022.8,706.3 2017.6,703.8"/>
<polygon fill="#b4d3f1" points="2024.8,713.3 2025.9,713.0 2025.7,710.5 2026.7,708.6 2029.0,709.7 2028.5,712.5 2029.0,714.1 2026.9,713.0"/>
<polygon fill="#d6e7f8" points="2029.0,714.1 2030.3,710.8 2031.8,709.2 2034.2,706.5 2035.7,706.9 2034.7,710.8 2035.9,709.9 2036.8,712.5 2038.7,713.9 2036.3,715.2 2034.7,716.8 2035.9,719.4 2035.9,725.1 2034.9,719.9 2033.1,718.9 2031.4,719.4 2031.4,716.8"/>
<polygon fill="#92bfeb" points="2034.7,716.8 2036.3,715.2 2038.7,713.9 2038.3,717.3 2041.5,717.0 2043.0,719.7 2042.8,721.2 2039.9,721.3 2039.9,723.4 2038.1,722.2 2037.3,723.6 2036.6,726.4 2037.8,728.2 2039.4,729.4 2037.6,729.2 2035.5,727.7 2035.9,725.1 2035.9,719.4"/>
<polygon fill="#92bfeb" points="2039.6,712.5 2042.8,711.6 2044.4,712.1 2046.1,713.2 2044.1,715.2 2043.3,716.5 2046.4,719.9 2047.0,723.6 2044.6,725.1 2042.5,726.9 2042.5,725.4 2042.0,725.1 2043.5,724.1 2045.1,721.5 2045.1,719.4 2042.0,715.7 2041.5,714.1"/>
<polygon fill="#84b5e8" points="2037.6,729.2 2039.4,729.4 2040.7,731.8 2041.5,734.4 2040.8,734.4 2038.7,733.0 2037.6,730.2"/>
<polygon fill="#b4d3f1" points="2016.5,726.0 2018.4,728.2 2017.1,729.7 2016.3,728.2"/>
<polygon fill="#a6caef" points="2059.1,709.5 2060.2,709.7 2058.9,713.0 2058.2,711.9"/>
<polygon fill="#5e9ee2" stroke="#5e9ee2" stroke-width="1.4" points="2069.4,699.2 2071.1,697.4 2074.7,696.8 2075.7,695.1 2077.8,694.2 2078.9,691.6 2080.2,689.8 2080.7,692.9 2079.9,694.2 2079.7,697.1 2078.7,698.0 2077.5,698.4 2075.7,698.5 2074.2,699.7 2073.7,698.5 2071.6,698.9"/>
<polygon fill="#5e9ee2" stroke="#5e9ee2" stroke-width="1.2" points="2068.3,700.2 2070.3,699.7 2070.0,702.2 2068.8,702.6"/>
<polygon fill="#5e9ee2" points="2070.9,699.5 2073.1,699.0 2072.8,700.1 2071.6,700.7"/>
<polygon fill="#5e9ee2" stroke="#5e9ee2" stroke-width="1.2" points="2078.9,689.5 2080.7,684.3 2084.4,686.5 2082.3,688.9 2079.9,688.3"/>
<polygon fill="#a6caef" points="2058.6,716.8 2060.4,716.9 2060.2,719.4 2062.2,722.5 2059.1,721.7 2058.1,719.4"/>
<polygon fill="#a6caef" points="2060.2,723.8 2063.8,723.3 2063.3,725.6 2061.2,726.2"/>
<polygon fill="#a6caef" points="2060.2,728.7 2063.8,726.0 2064.8,728.7 2063.7,729.9"/>
<polygon fill="#a6caef" points="2055.2,727.4 2057.6,725.1 2057.8,724.3 2055.5,726.7"/>
<polygon fill="#2c7bd9" stroke="#2c7bd9" stroke-width="2.2" points="2030.9,730.1 2034.1,731.6 2037.0,733.8 2040.7,736.8 2043.4,739.0 2043.2,741.7 2041.6,741.7 2038.7,739.8 2036.8,736.8 2034.9,734.1"/>
<polygon fill="#2c7bd9" stroke="#2c7bd9" stroke-width="1.6" points="2047.0,734.0 2049.0,733.1 2050.8,732.3 2052.9,730.7 2054.7,728.7 2057.0,730.5 2055.7,732.3 2056.0,734.8 2054.2,737.3 2053.9,739.6 2052.4,739.8 2049.6,739.1 2047.7,737.3 2046.7,735.5"/>
<polygon fill="#2c7bd9" stroke="#2c7bd9" stroke-width="2.0" points="2042.8,742.7 2046.1,742.5 2048.7,742.5 2052.4,743.6 2052.3,744.6 2047.7,744.1 2044.1,743.3"/>
<polygon fill="#2c7bd9" stroke="#2c7bd9" stroke-width="2.0" points="2057.9,735.0 2059.1,734.6 2063.3,734.2 2061.5,735.5 2058.6,735.5 2059.6,736.8 2061.5,736.7 2060.2,737.8 2061.4,740.0 2060.5,740.9 2059.3,738.8 2058.4,741.5 2057.6,741.4 2057.4,739.1"/>
<polygon fill="#2c7bd9" stroke="#2c7bd9" stroke-width="1.8" points="2053.7,744.1 2057.0,744.1 2061.2,744.2 2063.3,744.4 2065.4,744.3 2062.2,746.2 2058.1,746.0 2056.8,744.9 2053.7,744.7"/>
<polygon fill="#2c7bd9" stroke="#2c7bd9" stroke-width="2.0" points="2065.9,734.0 2067.1,735.3 2066.2,736.6"/>
<polygon fill="#2c7bd9" stroke="#2c7bd9" stroke-width="1.6" points="2064.3,738.9 2069.3,738.8 2068.0,739.4 2064.5,739.5"/>
<polygon fill="#2c7bd9" stroke="#2c7bd9" stroke-width="1.2" points="2069.5,736.6 2072.6,736.6 2073.7,739.1 2076.8,737.5 2079.9,738.4 2079.9,745.0 2076.8,744.2 2076.6,743.1 2073.7,740.4 2071.6,739.8 2071.3,738.5"/>
<polygon fill="#f0f0f0" points="2079.9,738.4 2084.1,740.1 2087.0,741.9 2086.1,742.7 2089.8,746.6 2086.1,745.8 2083.0,743.6 2081.5,745.1 2079.9,745.0"/>
<polygon fill="#f0f0f0" points="2087.7,741.4 2091.3,740.0 2091.6,740.9 2088.7,742.2"/>
<polygon fill="#f0f0f0" points="2095.5,742.9 2099.1,744.1 2101.2,745.8 2099.6,745.5 2096.5,744.1"/>
<polygon fill="#b4d3f1" points="2048.5,759.2 2049.3,763.7 2050.2,768.3 2051.0,772.3 2053.3,774.4 2059.6,773.0 2062.4,771.1 2068.0,770.1 2071.5,771.6 2073.4,774.2 2075.3,771.9 2076.3,774.4 2078.5,778.2 2082.4,778.5 2085.0,779.6 2089.1,777.6 2090.5,772.5 2092.4,769.5 2093.0,766.0 2092.4,762.5 2090.0,760.3 2088.0,757.3 2085.0,755.9 2084.0,751.6 2081.9,750.9 2080.8,747.2 2079.9,749.0 2079.6,751.6 2078.9,754.3 2076.9,754.1 2073.0,751.4 2074.5,748.8 2070.2,747.9 2068.0,748.8 2066.3,751.6 2064.4,750.9 2061.5,751.1 2058.2,754.8 2054.6,757.0 2051.3,757.8"/>
<polygon fill="#b4d3f1" points="2083.2,781.8 2087.2,782.1 2086.9,785.3 2084.7,785.9 2083.8,783.9"/>
<polygon fill="#f0f0f0" points="2103.8,756.6 2106.9,758.9 2106.4,759.1 2103.6,757.1"/>
<polygon fill="#f0f0f0" points="2117.6,753.7 2119.1,753.8 2118.9,754.6 2117.6,754.5"/>
<polygon fill="#c4dcf4" stroke="#c4dcf4" stroke-width="2.4" points="1840.4,612.7 1846.1,613.1 1850.3,613.5 1852.4,610.0 1855.0,604.4 1857.6,602.9 1860.7,597.6 1865.9,589.9 1869.5,578.8 1864.8,574.8 1858.6,573.2 1852.4,573.2 1845.1,578.0 1839.9,581.8 1837.8,587.3 1840.9,591.8 1844.0,593.0 1842.0,600.3 1844.0,603.9 1842.0,607.7"/>
<polygon fill="#c4dcf4" stroke="#c4dcf4" stroke-width="2.4" points="1833.1,595.9 1836.8,586.6 1841.4,593.0 1843.0,600.3 1839.9,603.9 1835.7,602.9"/>
<polygon fill="#c4dcf4" stroke="#c4dcf4" stroke-width="2.6" points="1833.1,610.9 1836.8,613.1 1840.4,615.6 1850.3,615.6 1850.8,619.2 1846.1,620.3 1838.9,619.9 1837.3,615.2"/>
<polygon fill="#c4dcf4" stroke="#c4dcf4" stroke-width="2.6" points="1825.3,611.4 1831.6,611.4 1835.7,616.0 1832.6,618.8 1827.4,616.8"/>
<polygon fill="#c4dcf4" stroke="#c4dcf4" stroke-width="2.6" points="1811.8,614.4 1817.0,613.1 1823.3,613.5 1823.8,618.4 1819.1,620.3 1815.0,619.2 1811.3,617.2"/>
<polygon fill="#c4dcf4" stroke="#c4dcf4" stroke-width="2.4" points="1806.6,613.5 1810.8,608.2 1818.1,604.4 1819.1,606.3 1812.9,612.2 1810.8,614.8"/>
<polygon fill="#c4dcf4" stroke="#c4dcf4" stroke-width="2.4" points="1824.3,598.7 1830.5,598.7 1832.6,605.4 1827.4,607.3 1824.3,602.9"/>
<polygon fill="#c4dcf4" stroke="#c4dcf4" stroke-width="2.2" points="1804.0,621.1 1809.8,621.4 1813.4,624.7 1811.3,628.1 1809.8,630.7 1805.6,632.0 1802.7,629.4 1803.5,624.0"/>
<polygon fill="#c4dcf4" stroke="#c4dcf4" stroke-width="2.4" points="1809.8,630.4 1811.8,625.4 1817.0,626.1 1821.2,624.7 1824.3,624.7 1826.9,630.7 1828.5,635.3 1827.9,638.2 1823.3,639.6 1816.0,639.6 1812.4,636.8 1811.3,633.5"/>
<polygon fill="#c4dcf4" stroke="#c4dcf4" stroke-width="2.6" points="1826.9,622.6 1832.1,622.6 1833.1,627.1 1831.1,631.4 1826.9,629.4"/>
<polygon fill="#c4dcf4" stroke="#c4dcf4" stroke-width="2.6" points="1834.0,621.8 1839.6,622.2 1839.4,625.7 1836.3,629.8 1834.2,628.4 1833.7,625.0"/>
<polygon fill="#c4dcf4" stroke="#c4dcf4" stroke-width="2" points="1830.0,635.6 1834.2,636.2 1834.2,639.0 1830.5,639.6"/>
<polygon fill="#c4dcf4" stroke="#c4dcf4" stroke-width="2.0" points="1840.4,625.0 1845.1,622.9 1849.2,622.9 1853.4,625.7 1856.5,629.8 1859.6,631.7 1862.7,634.4 1863.8,637.6 1869.0,642.8 1869.5,645.4 1867.4,648.1 1865.9,648.6 1866.9,653.2 1864.8,655.6 1861.7,654.3 1858.6,653.2 1856.0,650.0 1852.4,650.2 1857.0,647.4 1857.6,642.3 1853.4,635.9 1851.3,634.4 1848.2,635.9 1845.1,635.3 1842.0,633.8 1840.4,632.3 1839.9,629.1"/>
<polygon fill="#c4dcf4" stroke="#c4dcf4" stroke-width="1.6" points="1843.0,646.6 1846.1,645.6 1849.2,650.5 1848.2,652.5 1844.6,653.2 1843.0,650.9"/>
<polygon fill="#4a90dd" stroke="#4a90dd" stroke-width="3.2" points="1764.0,668.6 1758.8,671.1 1753.7,672.7 1749.5,674.1 1749.5,675.0 1754.7,674.1 1759.9,672.4 1764.6,670.0"/>
<polygon fill="#4a90dd" points="1772.9,663.9 1775.2,663.5 1775.0,665.4 1772.9,665.7"/>
<polygon fill="#4a90dd" stroke="#4a90dd" stroke-width="2.6" points="1771.1,714.7 1772.7,715.6 1771.7,716.5 1771.0,715.7"/>
<polygon fill="#4a90dd" stroke="#4a90dd" stroke-width="1.8" points="1768.8,713.2 1769.8,713.3 1771.2,714.2 1770.5,714.5 1769.0,713.9"/>
<polygon fill="#92bfeb" points="1740.1,635.6 1749.5,641.0 1758.8,646.9 1754.2,650.2 1747.3,649.5 1746.7,655.4 1740.1,657.3"/>
<polygon fill="#92bfeb" points="1745.5,633.5 1749.3,633.5 1749.3,631.0 1745.5,631.0"/>
<polygon fill="#92bfeb" points="2116.3,634.1 2121.5,634.1 2121.5,631.7 2116.3,631.7"/>
<polygon fill="#f0f0f0" stroke="#f0f0f0" stroke-width="1.6" points="1944.3,597.6 1945.3,605.4 1947.9,609.1 1951.1,612.2 1953.1,607.7 1956.3,608.7 1958.9,606.3 1955.2,602.4 1957.3,599.2 1961.5,595.9 1967.7,593.6 1961.5,591.8 1954.2,590.5 1947.9,594.7"/>
<polygon fill="#92bfeb" stroke="#92bfeb" stroke-width="1.4" points="1979.1,591.8 1985.4,595.3 1992.6,594.2 1997.8,591.8 2000.9,587.3 1995.7,583.2 1987.4,584.6 1981.2,588.6"/>
<polygon fill="#92bfeb" stroke="#92bfeb" stroke-width="1.6" points="2024.8,587.3 2033.1,586.6 2037.3,594.7 2043.5,604.4 2041.5,606.3 2035.2,600.3 2027.9,594.7"/>
<polygon fill="#92bfeb" stroke="#92bfeb" stroke-width="1.4" points="1986.9,631.4 1991.1,633.5 1993.1,630.7 1991.1,626.4 1992.6,622.2 1996.8,617.2 2004.9,611.4 2004.1,609.6 1997.8,611.8 1992.1,616.4 1989.0,622.9 1987.4,627.4"/>
<polygon fill="#92bfeb" stroke="#92bfeb" stroke-width="1.4" points="2074.2,616.4 2076.8,619.6 2082.0,618.8 2085.1,617.2 2089.8,618.4 2090.3,616.0 2085.1,613.5 2078.9,613.5 2075.7,614.4"/>
<polygon fill="#92bfeb" points="1983.6,636.8 1985.1,636.8 1985.1,638.8 1983.6,638.8"/>
<polygon fill="#d6e7f8" points="1927.3,697.0 1931.3,697.8 1936.5,695.8 1943.8,695.1 1944.8,695.6 1944.0,698.9 1945.3,700.2 1949.5,701.3 1953.7,703.4 1954.4,701.3 1957.3,700.8 1959.4,702.0 1963.5,702.8 1967.0,702.5 1969.0,702.5 1969.7,704.6 1968.2,706.3 1970.3,710.8 1971.8,714.1 1972.3,716.8 1974.2,719.9 1978.1,723.1 1978.4,724.1 1979.6,725.2 1986.6,723.8 1986.2,726.7 1983.3,731.2 1979.1,734.8 1976.5,737.6 1974.1,740.6 1974.4,743.9 1975.5,746.5 1975.7,751.1 1969.8,756.2 1970.3,760.8 1967.5,763.0 1967.2,765.9 1964.6,769.4 1961.5,772.1 1956.3,772.6 1954.2,773.4 1952.4,772.4 1952.3,770.0 1949.2,764.2 1948.5,759.1 1945.7,753.8 1947.7,748.0 1946.1,741.9 1943.1,738.1 1943.3,734.8 1943.6,732.3 1942.2,731.2 1938.6,729.7 1935.0,729.5 1930.3,730.7 1925.6,731.3 1921.5,728.7 1919.6,726.7 1917.8,724.6 1915.9,723.1 1915.2,720.8 1916.5,716.8 1915.7,714.1 1916.8,711.1 1918.3,708.3 1920.1,706.3 1923.0,704.5 1923.3,702.2 1926.3,699.2"/>
<polygon fill="#f0f0f0" points="1915.7,714.1 1916.8,711.1 1918.3,708.3 1920.1,706.3 1924.4,706.6 1924.4,708.6 1920.9,708.6 1920.9,711.5 1919.9,713.8"/>
<polygon fill="#f0f0f0" points="1915.7,714.1 1919.9,713.8 1920.9,711.5 1920.9,708.6 1924.4,708.6 1924.4,707.1 1928.4,709.7 1926.6,709.7 1927.7,719.9 1920.9,720.7 1918.3,718.8 1916.3,719.4 1916.5,716.8"/>
<polygon fill="#f0f0f0" points="1928.4,709.7 1936.5,716.2 1937.8,718.9 1933.4,720.5 1927.7,725.3 1925.1,725.1 1921.5,723.3 1920.9,720.7 1927.7,719.9 1926.6,709.7"/>
<polygon fill="#d6e7f8" points="1915.2,720.8 1916.3,719.4 1918.3,718.8 1920.9,720.7 1921.5,723.3 1915.9,723.1"/>
<polygon fill="#f0f0f0" points="1917.8,724.6 1921.5,723.3 1925.1,725.1 1925.6,731.3 1921.5,728.7 1919.6,726.7"/>
<polygon fill="#f0f0f0" points="1927.7,725.3 1933.4,720.5 1935.8,723.6 1933.9,724.6 1930.5,724.6 1930.5,726.0"/>
<polygon fill="#f0f0f0" points="1936.5,716.2 1939.6,715.7 1945.9,711.4 1947.9,712.2 1950.0,715.2 1949.5,718.9 1947.4,721.8 1940.7,722.5 1937.2,723.6 1935.8,723.6 1933.7,720.5 1937.8,718.9"/>
<polygon fill="#f0f0f0" points="1945.3,700.2 1949.5,701.3 1953.7,703.4 1954.4,701.3 1957.3,700.8 1959.4,702.0 1959.4,715.2 1958.3,715.7 1950.0,711.6 1947.9,712.2 1945.9,711.4 1943.8,710.3 1943.3,703.6 1944.1,702.2"/>
<polygon fill="#f0f0f0" points="1947.9,712.2 1950.0,711.6 1958.3,715.7 1958.3,719.4 1956.8,722.5 1956.8,724.6 1953.1,726.7 1949.5,728.2 1947.9,725.6 1949.5,722.5 1947.4,721.8 1949.5,718.9 1950.0,715.2"/>
<polygon fill="#f0f0f0" points="1959.4,713.0 1971.6,713.0 1972.3,716.8 1973.4,717.3 1971.3,721.0 1970.8,723.1 1968.7,726.2 1967.7,727.7 1968.7,731.5 1965.6,732.3 1962.0,730.7 1958.3,727.0 1956.8,722.5 1958.3,719.4 1958.3,715.7 1959.4,715.2"/>
<polygon fill="#f0f0f0" points="1949.5,728.2 1953.1,726.7 1956.8,724.6 1958.3,727.0 1962.0,730.7 1956.8,731.8 1952.6,731.2 1950.0,733.8 1948.5,730.7"/>
<polygon fill="#f0f0f0" points="1942.3,731.0 1945.7,728.7 1947.9,724.1 1947.9,725.6 1949.5,728.2 1948.5,730.7 1950.0,733.8 1943.6,733.5 1943.6,732.3"/>
<polygon fill="#f0f0f0" points="1943.1,738.1 1943.3,734.8 1943.6,733.5 1950.0,733.8 1952.6,731.2 1951.8,736.3 1950.0,737.8 1949.8,739.8 1946.1,741.1 1944.8,739.7"/>
<polygon fill="#c4dcf4" points="1959.4,702.0 1963.5,702.8 1967.0,702.5 1969.0,702.5 1969.7,704.6 1968.2,706.3 1970.3,710.8 1971.6,713.0 1959.4,713.0"/>
<polygon fill="#c4dcf4" points="1937.2,723.6 1940.7,722.5 1947.4,721.8 1947.9,724.1 1945.7,728.7 1942.3,731.0 1939.1,731.5 1936.3,729.4"/>
<polygon fill="#c4dcf4" points="1968.7,731.5 1976.0,731.8 1976.5,737.6 1974.1,740.6 1972.4,738.8 1968.7,736.8"/>
<polygon fill="#f0f0f0" points="1956.3,749.1 1958.3,747.0 1962.0,748.0 1963.5,749.5 1965.3,744.2 1968.2,745.4 1967.7,750.1 1964.9,751.1 1961.5,754.3 1957.8,753.8 1956.3,752.2"/>
<polygon fill="#f0f0f0" points="1959.7,754.1 1961.5,754.3 1964.9,751.8 1967.7,753.2 1967.2,757.5 1966.1,759.1 1963.8,758.8 1961.5,757.0"/>
<polygon fill="#f0f0f0" points="1945.7,753.8 1946.9,753.4 1957.8,753.8 1959.4,754.0 1955.2,754.6 1955.2,758.6 1954.2,758.6 1954.2,765.9 1951.1,765.9 1949.2,764.2 1948.5,759.1"/>
<polygon fill="#f0f0f0" points="1955.2,754.6 1959.4,754.0 1961.5,757.0 1963.8,758.8 1961.5,760.8 1959.9,762.7 1957.3,762.2 1954.2,761.9 1954.2,758.6 1955.2,758.6"/>
<polygon fill="#c4dcf4" points="1951.1,765.9 1954.2,765.9 1954.2,761.9 1957.3,762.2 1959.9,762.7 1961.5,760.8 1963.8,758.8 1966.1,759.1 1966.6,763.0 1967.5,763.9 1967.2,765.9 1964.6,769.4 1961.5,772.1 1956.3,772.6 1954.2,773.4 1952.4,772.4 1952.3,770.0"/>
<polygon fill="#c4dcf4" points="1984.6,748.0 1985.9,751.7 1982.8,761.7 1980.4,762.5 1978.6,759.7 1979.4,753.2 1982.2,751.1"/>
<polygon fill="#f0f0f0" points="1988.8,722.9 1990.0,723.0 1989.9,723.3 1988.9,723.3"/>
<polygon fill="#b4d3f1" points="2047.4,734.1 2049.0,733.1 2050.8,732.3 2052.9,730.7 2054.7,728.7 2057.0,730.5 2055.7,731.5 2053.5,731.5 2052.6,733.8 2050.8,734.3 2048.7,734.7"/>
<polygon fill="#b4d3f1" stroke="#b4d3f1" stroke-width="1.2" points="2110.2,774.1 2112.2,776.1 2113.8,777.9 2116.5,778.1 2115.0,780.6 2113.1,783.6 2112.3,781.3 2111.4,780.5 2112.4,778.4"/>
<polygon fill="#b4d3f1" stroke="#b4d3f1" stroke-width="1.2" points="2110.4,782.0 2112.1,783.6 2110.7,786.7 2108.8,789.7 2106.1,791.2 2103.7,789.7 2105.8,787.0 2108.4,785.0"/>
<polygon fill="#b4d3f1" points="2104.8,790.9 2105.8,790.9 2105.7,791.8 2104.8,791.8"/>
<circle cx="1747" cy="753.9" r="1.15" fill="#f0f0f0" stroke="none"/>
<circle cx="1755.2" cy="750.7" r="1.15" fill="#f0f0f0" stroke="none"/>
<circle cx="1779.1" cy="755" r="1.15" fill="#f0f0f0" stroke="none"/>
<circle cx="1894.8" cy="801.8" r="1.15" fill="#f0f0f0" stroke="none"/>
<circle cx="2003.8" cy="794.6" r="1.15" fill="#f0f0f0" stroke="none"/>
<circle cx="2008.2" cy="799.9" r="1.15" fill="#f0f0f0" stroke="none"/>
<circle cx="1923.6" cy="631.7" r="1.15" fill="#f0f0f0" stroke="none"/>
<circle cx="1926" cy="655.1" r="1.15" fill="#f0f0f0" stroke="none"/>
<circle cx="1903.2" cy="693.5" r="1.15" fill="#f0f0f0" stroke="none"/>
<circle cx="1906.3" cy="694.6" r="1.15" fill="#f0f0f0" stroke="none"/>
<circle cx="1915.2" cy="701.1" r="1.15" fill="#f0f0f0" stroke="none"/>
<circle cx="2118.8" cy="753.9" r="1.15" fill="#f0f0f0" stroke="none"/>
<circle cx="2115" cy="754.3" r="1.15" fill="#f0f0f0" stroke="none"/>
<circle cx="2109.7" cy="672.4" r="1.15" fill="#4a90dd" stroke="none"/>
<circle cx="2116.5" cy="674.8" r="1.15" fill="#4a90dd" stroke="none"/>
<circle cx="1989.5" cy="758.2" r="1.15" fill="#f0f0f0" stroke="none"/>
<circle cx="1985" cy="751" r="1.15" fill="#f0f0f0" stroke="none"/>
<circle cx="2104.5" cy="755.5" r="1.15" fill="#f0f0f0" stroke="none"/>
<circle cx="2108" cy="759.2" r="1.15" fill="#f0f0f0" stroke="none"/>
<circle cx="1914.6" cy="706.5" r="1.15" fill="#f0f0f0" stroke="none"/>
<circle cx="1903.5" cy="722.5" r="1.15" fill="#f0f0f0" stroke="none"/>
</g>
<rect x="1728.3" y="775.9" width="79.6" height="14.4" fill="url(#lg1)"/>
<text x="1718.9" y="788.6" font-size="16.5" text-anchor="end" fill="#000" stroke="#fff" stroke-width="3.2" stroke-linejoin="round" paint-order="stroke" textLength="9.3" lengthAdjust="spacingAndGlyphs">1</text>
<text x="1816.3" y="788.6" font-size="16.5" text-anchor="start" fill="#000" stroke="#fff" stroke-width="3.2" stroke-linejoin="round" paint-order="stroke" textLength="49.6" lengthAdjust="spacingAndGlyphs">12,559</text>
</svg>
<svg width="360" height="220" viewBox="1740 830 360 220" style="left:1740px;top:830px">
<path d="M1860.50 846.30A92.2 92.2 0 0 1 1869.18 1030.29L1864.81 984.10A45.8 45.8 0 0 0 1860.50 892.70Z" fill="#1976d2"/>
<path d="M1869.18 1030.29A92.2 92.2 0 0 1 1822.29 854.59L1841.52 896.82A45.8 45.8 0 0 0 1864.81 984.10Z" fill="#b71c1c"/>
<path d="M1822.29 854.59A92.2 92.2 0 0 1 1860.50 846.30L1860.50 892.70A45.8 45.8 0 0 0 1841.52 896.82Z" fill="#f4b400"/>
<text x="1894.5" y="941.6" font-size="15.5" text-anchor="start" fill="#ffffff" textLength="41.6" lengthAdjust="spacingAndGlyphs">48.5%</text>
<text x="1787.7" y="958.2" font-size="15.5" text-anchor="start" fill="#dfe3ee" textLength="41.6" lengthAdjust="spacingAndGlyphs">44.7%</text>
<circle cx="1985.4" cy="913.6" r="7.7" fill="#1976d2"/>
<text x="2000.2" y="918.7" font-size="15.5" text-anchor="start" fill="#c3c3c3" textLength="41.4" lengthAdjust="spacingAndGlyphs">win32</text>
<circle cx="1985.4" cy="938.5" r="7.7" fill="#b71c1c"/>
<text x="2000.2" y="943.6" font-size="15.5" text-anchor="start" fill="#c3c3c3" textLength="46.5" lengthAdjust="spacingAndGlyphs">darwin</text>
<circle cx="1985.4" cy="963.4" r="7.7" fill="#f4b400"/>
<text x="2000.2" y="968.5" font-size="15.5" text-anchor="start" fill="#c3c3c3" textLength="32.3" lengthAdjust="spacingAndGlyphs">linux</text>
</svg>
</body>
</html>
